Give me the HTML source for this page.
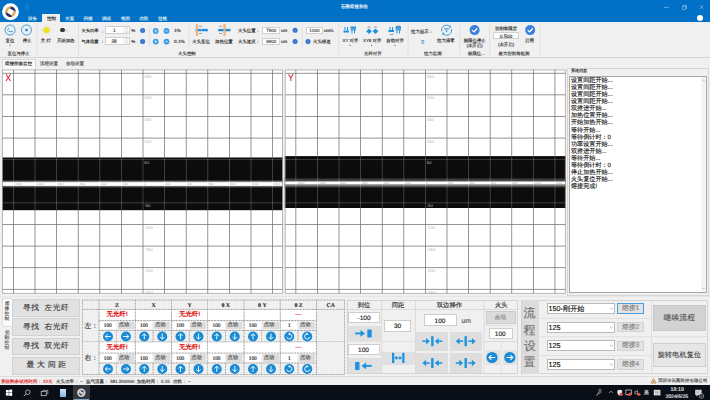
<!DOCTYPE html><html><head><meta charset="utf-8"><style>
*{box-sizing:border-box;margin:0;padding:0}
html,body{width:710px;height:400px;overflow:hidden;background:#f0f0f0;font-family:"Liberation Sans",sans-serif;color:#333;text-rendering:geometricPrecision}
.ab{position:absolute}
.t{position:absolute;white-space:nowrap;-webkit-text-stroke:0.15px currentColor}
</style></head><body>
<div class="ab" style="left:0.00px;top:0.00px;width:710.00px;height:21.50px;background:#0071c6;"></div><svg class="ab" style="left:1px;top:2px" width="19" height="20"><g transform="translate(0.000 0.250)"><circle cx="9.5" cy="9.5" r="8.4" fill="#fff"/>
<g transform="translate(9.5 9.5)">
<path d="M-1.6 -5.0 A5.2 5.2 0 0 1 5.1 1.0 Q3.6 -1.4 -0.6 -3.2 Z" fill="#2a3563"/>
<path d="M-1.6 -5.0 A5.2 5.2 0 0 1 5.1 1.0 Q3.6 -1.4 -0.6 -3.2 Z" fill="#eaa766" transform="rotate(90)"/>
<path d="M-1.6 -5.0 A5.2 5.2 0 0 1 5.1 1.0 Q3.6 -1.4 -0.6 -3.2 Z" fill="#2a3563" transform="rotate(180)"/>
<path d="M-1.6 -5.0 A5.2 5.2 0 0 1 5.1 1.0 Q3.6 -1.4 -0.6 -3.2 Z" fill="#eaa766" transform="rotate(270)"/>
</g></g></svg><div class="ab" style="left:25.30px;top:4.00px;width:4.20px;height:5.60px;background:#2f8ddf;border-radius:0.8px;opacity:0.35"></div><div class="t" style="left:340.80px;top:5.00px;font-size:4.5px;line-height:4.5px;color:#e6effa;">石墨熔接系统</div><svg class="ab" style="left:663px;top:6px" width="7" height="3"><g transform="translate(0.000 0.000)"><path d="M0.8 1.4H5.6" stroke="#b8d6f2" stroke-width="0.55"/></g></svg><svg class="ab" style="left:681px;top:4px" width="7" height="7"><g transform="translate(0.500 0.500)"><rect x="0.9" y="1.6" width="3.3" height="3.3" fill="none" stroke="#b8d6f2" stroke-width="0.5"/><path d="M1.8 1.6V0.8H5.0V4.0H4.2" fill="none" stroke="#b8d6f2" stroke-width="0.5"/></g></svg><svg class="ab" style="left:699px;top:4px" width="6" height="6"><g transform="translate(0.300 0.700)"><path d="M0.6 0.6L4.2 4.2M4.2 0.6L0.6 4.2" stroke="#c4dcf4" stroke-width="0.5"/></g></svg><div class="ab" style="left:697.00px;top:15.00px;width:6.00px;height:6.00px;background:#fff;border-radius:50%;"></div><div class="ab" style="left:41.90px;top:13.80px;width:18.50px;height:7.80px;background:#f0f0f0;"></div><div class="t" style="left:28.10px;top:16.60px;font-size:4.5px;line-height:4.5px;color:#d6e5f5;">设备</div><div class="t" style="left:46.90px;top:16.60px;font-size:4.5px;line-height:4.5px;color:#333;">控制</div><div class="t" style="left:65.30px;top:16.60px;font-size:4.5px;line-height:4.5px;color:#d6e5f5;">夹紧</div><div class="t" style="left:83.50px;top:16.60px;font-size:4.5px;line-height:4.5px;color:#d6e5f5;">扫描</div><div class="t" style="left:102.00px;top:16.60px;font-size:4.5px;line-height:4.5px;color:#d6e5f5;">调试</div><div class="t" style="left:121.00px;top:16.60px;font-size:4.5px;line-height:4.5px;color:#d6e5f5;">视图</div><div class="t" style="left:139.30px;top:16.60px;font-size:4.5px;line-height:4.5px;color:#d6e5f5;">功耗</div><div class="t" style="left:158.00px;top:16.60px;font-size:4.5px;line-height:4.5px;color:#d6e5f5;">拉锥</div><div class="ab" style="left:0.00px;top:21.50px;width:710.00px;height:36.10px;background:#f0f0f0;border-bottom:0.8px solid #d4d4d4"></div><svg class="ab" style="left:36px;top:23px" width="2" height="33"><rect x="0.600" y="0.500" width="0.700" height="32.500" fill="#dadada"/></svg><svg class="ab" style="left:78px;top:23px" width="1" height="33"><rect x="0.300" y="0.500" width="0.700" height="32.500" fill="#dadada"/></svg><svg class="ab" style="left:338px;top:23px" width="2" height="33"><rect x="0.500" y="0.500" width="0.700" height="32.500" fill="#dadada"/></svg><svg class="ab" style="left:407px;top:23px" width="2" height="33"><rect x="0.700" y="0.500" width="0.700" height="32.500" fill="#dadada"/></svg><svg class="ab" style="left:459px;top:23px" width="2" height="33"><rect x="0.600" y="0.500" width="0.700" height="32.500" fill="#dadada"/></svg><svg class="ab" style="left:489px;top:23px" width="2" height="33"><rect x="0.400" y="0.500" width="0.700" height="32.500" fill="#dadada"/></svg><svg class="ab" style="left:539px;top:23px" width="2" height="33"><rect x="0.500" y="0.500" width="0.700" height="32.500" fill="#dadada"/></svg><svg class="ab" style="left:149px;top:25px" width="2" height="22"><rect x="0.400" y="0.800" width="0.700" height="20.900" fill="#dadada"/></svg><svg class="ab" style="left:188px;top:25px" width="2" height="22"><rect x="0.600" y="0.800" width="0.700" height="20.900" fill="#dadada"/></svg><svg class="ab" style="left:301px;top:25px" width="2" height="22"><rect x="0.800" y="0.800" width="0.700" height="20.900" fill="#dadada"/></svg><div class="t" style="left:7.50px;top:51.80px;font-size:4.42px;line-height:4.42px;color:#444;">复位与停止</div><div class="t" style="left:178.10px;top:51.80px;font-size:4.42px;line-height:4.42px;color:#444;">火头控制</div><div class="t" style="left:364.00px;top:51.80px;font-size:4.42px;line-height:4.42px;color:#444;">光纤对齐</div><div class="t" style="left:424.00px;top:51.80px;font-size:4.42px;line-height:4.42px;color:#444;">拉力监测</div><div class="t" style="left:468.00px;top:51.80px;font-size:4.42px;line-height:4.42px;color:#444;">极限位...</div><div class="t" style="left:498.50px;top:51.80px;font-size:4.42px;line-height:4.42px;color:#444;">最大切割角检测</div><svg class="ab" style="left:4px;top:24px" width="13" height="13"><g transform="translate(0.000 0.000)"><circle cx="6.1" cy="6.0" r="5.0" fill="none" stroke="#c4ecff" stroke-width="1.8"/><circle cx="6.1" cy="6.0" r="5.0" fill="none" stroke="#4a8cc0" stroke-width="0.75"/><path d="M4.9 4.0Q3.4 4.6 3.9 6.4Q4.4 7.7 6.3 7.6H8.2" fill="none" stroke="#3a90d0" stroke-width="0.85"/><path d="M7.6 6.5L8.8 7.6L7.6 8.6Z" fill="#2a80c0"/></g></svg><svg class="ab" style="left:20px;top:24px" width="13" height="13"><g transform="translate(0.400 0.000)"><circle cx="6.1" cy="6.0" r="5.0" fill="none" stroke="#c4ecff" stroke-width="1.8"/><circle cx="6.1" cy="6.0" r="5.0" fill="none" stroke="#4a8cc0" stroke-width="0.75"/><rect x="4.9" y="4.8" width="2.4" height="2.4" fill="#2a88d0"/></g></svg><div class="t" style="left:5.50px;top:39.25px;font-size:4.4px;line-height:4.4px;color:#363636;">复位</div><div class="t" style="left:22.70px;top:39.25px;font-size:4.4px;line-height:4.4px;color:#363636;">停止</div><svg class="ab" style="left:9px;top:44px" width="2" height="2"><rect x="0.600" y="0.800" width="1.000" height="1.000" fill="#555"/></svg><svg class="ab" style="left:41px;top:24px" width="11" height="12"><g transform="translate(0.000 0.600)"><circle cx="5.5" cy="5.5" r="2.9" fill="#f2e21a" stroke="#d8c400" stroke-width="0.3"/><g stroke="#c9b300" stroke-width="0.45"><path d="M5.5 0.3v1.3M5.5 9.4v1.3M0.3 5.5h1.3M9.4 5.5h1.3M1.9 1.9l0.9 0.9M8.2 8.2l0.9 0.9M9.1 1.9l-0.9 0.9M1.9 9.1l0.9-0.9"/></g></g></svg><div class="t" style="left:40.85px;top:39.25px;font-size:4.4px;line-height:4.4px;color:#363636;">关 灯</div><div class="ab" style="left:60.50px;top:28.80px;width:8.50px;height:3.20px;background:#e2e2e2;border-radius:2px;"></div><div class="ab" style="left:60.40px;top:28.30px;width:4.20px;height:4.20px;background:#333;border-radius:50%;"></div><div class="t" style="left:56.90px;top:39.25px;font-size:4.4px;line-height:4.4px;color:#363636;">开始加热</div><div class="t" style="left:81.40px;top:29.00px;font-size:4.3px;line-height:4.3px;color:#363636;">火头功率</div><div class="t" style="left:81.40px;top:39.50px;font-size:4.3px;line-height:4.3px;color:#363636;">气体流量</div><div class="t" style="left:100.60px;top:29.50px;font-size:4.4px;line-height:4.4px;color:#363636;">：</div><div class="t" style="left:100.60px;top:40.00px;font-size:4.4px;line-height:4.4px;color:#363636;">：</div><div class="ab" style="left:105.20px;top:26.40px;width:24.40px;height:7.50px;background:#fff;border:0.6px solid #cfcfcf;"></div><svg class="ab" style="left:123px;top:26px" width="2" height="8"><rect x="0.600" y="0.400" width="0.600" height="7.500" fill="#d5d5d5"/></svg><div class="t" style="left:112.90px;top:30.35px;font-size:4.9px;line-height:4.9px;color:#444;">1</div><svg class="ab" style="left:123px;top:26px" width="7" height="8"><g transform="translate(0.600 0.400)"><path d="M1.9 2.4L3 1.3L4.1 2.4M1.9 5.10L3 6.20L4.1 5.10" stroke="#777" stroke-width="0.5" fill="none"/><path d="M1.6 3.75h2.8" stroke="#aaa" stroke-width="0.4"/></g></svg><div class="ab" style="left:105.20px;top:36.90px;width:24.40px;height:7.90px;background:#fff;border:0.6px solid #cfcfcf;"></div><svg class="ab" style="left:123px;top:36px" width="2" height="9"><rect x="0.600" y="0.900" width="0.600" height="7.900" fill="#d5d5d5"/></svg><div class="t" style="left:111.40px;top:41.05px;font-size:4.9px;line-height:4.9px;color:#444;">38</div><svg class="ab" style="left:123px;top:36px" width="7" height="9"><g transform="translate(0.600 0.900)"><path d="M1.9 2.4L3 1.3L4.1 2.4M1.9 5.50L3 6.60L4.1 5.50" stroke="#777" stroke-width="0.5" fill="none"/><path d="M1.6 3.95h2.8" stroke="#aaa" stroke-width="0.4"/></g></svg><div class="t" style="left:131.30px;top:29.40px;font-size:4.4px;line-height:4.4px;color:#363636;">%</div><div class="t" style="left:131.30px;top:39.90px;font-size:4.4px;line-height:4.4px;color:#363636;">%</div><svg class="ab" style="left:139px;top:27px" width="7" height="7"><g transform="translate(0.500 0.300)"><circle cx="3.1" cy="3.1" r="2.95" fill="#d6ecff"/><circle cx="3.1" cy="3.1" r="2.5" fill="#3a72c8"/><path d="M2.10 3.23L2.98 3.85L4.10 2.60" stroke="#9cc0f0" stroke-width="0.4" fill="none"/></g></svg><svg class="ab" style="left:139px;top:38px" width="7" height="7"><g transform="translate(0.500 0.300)"><circle cx="3.1" cy="3.1" r="2.95" fill="#d6ecff"/><circle cx="3.1" cy="3.1" r="2.5" fill="#3a72c8"/><path d="M2.10 3.23L2.98 3.85L4.10 2.60" stroke="#9cc0f0" stroke-width="0.4" fill="none"/></g></svg><svg class="ab" style="left:152px;top:28px" width="7" height="6"><g transform="translate(0.800 0.000)"><circle cx="2.9" cy="2.9" r="2.9" fill="#3a9de6"/><path d="M1.5 2.9h2.8M2.9 1.5v2.8" stroke="#fff" stroke-width="0.6"/></g></svg><svg class="ab" style="left:163px;top:28px" width="7" height="6"><g transform="translate(0.600 0.000)"><circle cx="2.9" cy="2.9" r="2.9" fill="#3a9de6"/><path d="M1.5 2.9h2.8" stroke="#fff" stroke-width="0.6"/></g></svg><svg class="ab" style="left:152px;top:38px" width="7" height="7"><g transform="translate(0.800 0.700)"><circle cx="2.9" cy="2.9" r="2.9" fill="#3a9de6"/><path d="M1.5 2.9h2.8M2.9 1.5v2.8" stroke="#fff" stroke-width="0.6"/></g></svg><svg class="ab" style="left:163px;top:38px" width="7" height="7"><g transform="translate(0.600 0.700)"><circle cx="2.9" cy="2.9" r="2.9" fill="#3a9de6"/><path d="M1.5 2.9h2.8" stroke="#fff" stroke-width="0.6"/></g></svg><div class="t" style="left:174.00px;top:29.40px;font-size:4.7px;line-height:4.7px;color:#363636;">1%</div><div class="t" style="left:174.00px;top:40.10px;font-size:4.7px;line-height:4.7px;color:#363636;">0.1%</div><svg class="ab" style="left:195px;top:24px" width="14" height="13"><g transform="translate(0.200 0.100)"><rect x="0" y="4.4" width="13" height="3.2" rx="1" fill="#9fdcff" opacity="0.7"/><rect x="0.5" y="5" width="5.6" height="2" fill="#1a86d8"/><rect x="6.6" y="5" width="6" height="2" fill="#1a86d8"/><rect x="0.60" y="0" width="2.4" height="11.8" fill="#f2ae72" opacity="0.92"/><path d="M3.90 2.2h3M3.90 9.3h3" stroke="#666" stroke-width="0.6"/></g></svg><svg class="ab" style="left:217px;top:24px" width="14" height="13"><g transform="translate(0.800 0.100)"><rect x="0" y="4.4" width="13" height="3.2" rx="1" fill="#9fdcff" opacity="0.7"/><rect x="0.5" y="5" width="5.6" height="2" fill="#1a86d8"/><rect x="6.6" y="5" width="6" height="2" fill="#1a86d8"/><rect x="5.50" y="0" width="2.4" height="11.8" fill="#f2ae72" opacity="0.92"/><path d="M1.20 2.2h3M1.20 9.3h3" stroke="#666" stroke-width="0.6"/></g></svg><div class="t" style="left:192.30px;top:39.50px;font-size:4.42px;line-height:4.42px;color:#363636;">火头复位</div><div class="t" style="left:215.10px;top:39.50px;font-size:4.42px;line-height:4.42px;color:#363636;">加热位置</div><div class="t" style="left:238.00px;top:29.40px;font-size:4.42px;line-height:4.42px;color:#363636;">火头位置：</div><div class="t" style="left:238.00px;top:39.90px;font-size:4.42px;line-height:4.42px;color:#363636;">火头速度：</div><div class="ab" style="left:262.00px;top:27.00px;width:18.40px;height:6.90px;background:#fff;border:0.6px solid #d0d0d0;"></div><div class="t" style="left:266.20px;top:28.95px;font-size:4.6px;line-height:4.6px;color:#555;">7900</div><div class="ab" style="left:262.00px;top:37.60px;width:18.40px;height:7.00px;background:#fff;border:0.6px solid #d0d0d0;"></div><div class="t" style="left:266.20px;top:39.60px;font-size:4.6px;line-height:4.6px;color:#555;">8900</div><div class="t" style="left:281.00px;top:29.40px;font-size:4.4px;line-height:4.4px;color:#363636;">um</div><div class="t" style="left:281.00px;top:39.90px;font-size:4.4px;line-height:4.4px;color:#363636;">um</div><svg class="ab" style="left:292px;top:27px" width="7" height="7"><g transform="translate(0.000 0.200)"><circle cx="3.1" cy="3.1" r="2.95" fill="#d6ecff"/><circle cx="3.1" cy="3.1" r="2.5" fill="#3a72c8"/><path d="M2.10 3.23L2.98 3.85L4.10 2.60" stroke="#9cc0f0" stroke-width="0.4" fill="none"/></g></svg><svg class="ab" style="left:292px;top:38px" width="7" height="7"><g transform="translate(0.000 0.400)"><circle cx="3.1" cy="3.1" r="2.95" fill="#d6ecff"/><circle cx="3.1" cy="3.1" r="2.5" fill="#3a72c8"/><path d="M2.10 3.23L2.98 3.85L4.10 2.60" stroke="#9cc0f0" stroke-width="0.4" fill="none"/></g></svg><div class="ab" style="left:305.50px;top:27.00px;width:17.70px;height:6.70px;background:#fff;border:0.6px solid #d0d0d0;"></div><div class="t" style="left:309.35px;top:28.85px;font-size:4.6px;line-height:4.6px;color:#555;">1000</div><div class="t" style="left:324.00px;top:29.40px;font-size:4.4px;line-height:4.4px;color:#363636;">um/s</div><svg class="ab" style="left:304px;top:38px" width="8" height="7"><g transform="translate(0.900 0.400)"><circle cx="3.1" cy="3.1" r="2.95" fill="#d6ecff"/><circle cx="3.1" cy="3.1" r="2.5" fill="#3a72c8"/><path d="M2.10 3.23L2.98 3.85L4.10 2.60" stroke="#9cc0f0" stroke-width="0.4" fill="none"/></g></svg><div class="t" style="left:313.00px;top:39.90px;font-size:4.42px;line-height:4.42px;color:#363636;">火头移速</div><svg class="ab" style="left:343px;top:26px" width="14" height="8"><g transform="translate(0.500 0.000)"><g fill="#1c8fe0"><rect x="0" y="4.5" width="5.5" height="2"/><rect x="1" y="1" width="1" height="3"/><rect x="3.5" y="1" width="1" height="3"/><rect x="7" y="0.5" width="5.5" height="2.2"/><rect x="7" y="3.2" width="5.5" height="1.2"/><rect x="8" y="4.4" width="1" height="3"/><rect x="10.5" y="4.4" width="1" height="3"/></g></g></svg><svg class="ab" style="left:366px;top:26px" width="13" height="9"><g transform="translate(0.000 0.000)"><g fill="#1c8fe0"><path d="M3 2.5L5.8 5.3L3 8.1L0.2 5.3Z"/><path d="M9.5 2.5L12.3 5.3L9.5 8.1L6.7 5.3Z"/></g><path d="M1.5 1.5Q3 0 4.5 1.5M8 1.5Q9.5 0 11 1.5" stroke="#333" stroke-width="0.5" fill="none"/></g></svg><svg class="ab" style="left:388px;top:25px" width="14" height="11"><g transform="translate(0.500 0.500)"><g fill="#1c8fe0"><rect x="0" y="4.5" width="5.5" height="2"/><rect x="1" y="1.5" width="1" height="3"/><rect x="3.5" y="1.5" width="1" height="3"/><rect x="7" y="1" width="5.5" height="2.2"/><rect x="7" y="3.7" width="5.5" height="1.2"/><rect x="8" y="4.9" width="1" height="3"/><rect x="10.5" y="4.9" width="1" height="3"/></g><path d="M1 8.5Q3 9.8 5 8.5M8 0.8Q10 -0.4 12 1" stroke="#333" stroke-width="0.5" fill="none"/></g></svg><div class="t" style="left:342.50px;top:39.00px;font-size:4.4px;line-height:4.4px;color:#363636;">XY 对齐</div><div class="t" style="left:363.00px;top:39.00px;font-size:4.4px;line-height:4.4px;color:#363636;">XYθ 对齐</div><div class="t" style="left:386.30px;top:39.00px;font-size:4.42px;line-height:4.42px;color:#363636;">自动对齐</div><svg class="ab" style="left:349px;top:44px" width="2" height="2"><rect x="0.500" y="0.900" width="1.000" height="1.000" fill="#555"/></svg><svg class="ab" style="left:371px;top:44px" width="1" height="2"><rect x="0.000" y="0.900" width="1.000" height="1.000" fill="#555"/></svg><svg class="ab" style="left:394px;top:44px" width="2" height="2"><rect x="0.500" y="0.900" width="1.000" height="1.000" fill="#555"/></svg><div class="t" style="left:411.00px;top:29.50px;font-size:4.42px;line-height:4.42px;color:#363636;">拉力显示：</div><div class="t" style="left:421.00px;top:40.60px;font-size:5.6px;line-height:5.6px;color:#3a8ee0;">0</div><svg class="ab" style="left:440px;top:24px" width="13" height="13"><g transform="translate(0.600 0.200)"><g transform="translate(6 6)"><path d="M-4.9 1.2A5 5 0 0 1 3.2 -3.9" stroke="#3aa0e0" stroke-width="1" fill="none"/><path d="M4.9 -1.2A5 5 0 0 1 -3.2 3.9" stroke="#3aa0e0" stroke-width="1" fill="none"/><path d="M3.9 -5.2L4.6 -2.6L2 -2.4Z" fill="#3aa0e0"/><path d="M-3.9 5.2L-4.6 2.6L-2 2.4Z" fill="#3aa0e0"/><path d="M-2.6 -1.6H2.6M-1.9 -0.3H1.9" stroke="#4a90c8" stroke-width="0.75"/><path d="M-1.3 0.6H1.3L0 2.4Z" fill="#3aa0e0"/></g></g></svg><div class="t" style="left:437.00px;top:39.20px;font-size:4.42px;line-height:4.42px;color:#363636;">拉力清零</div><svg class="ab" style="left:469px;top:25px" width="11" height="11"><g transform="translate(0.600 0.100)"><circle cx="5.0" cy="5.0" r="5.0" fill="#3d7fdc"/><path d="M2.50 5.00L4.40 6.80L7.50 3.40" stroke="#fff" stroke-width="1.30" fill="none"/></g></svg><div class="t" style="left:463.70px;top:39.10px;font-size:4.42px;line-height:4.42px;color:#363636;">极限位停止</div><div class="t" style="left:466.50px;top:44.30px;font-size:4.42px;line-height:4.42px;color:#363636;">(未开启)</div><div class="t" style="left:495.00px;top:26.50px;font-size:4.42px;line-height:4.42px;color:#363636;">切割角限定</div><div class="ab" style="left:493.30px;top:32.40px;width:25.90px;height:7.00px;background:#fff;border:0.6px solid #d0d0d0;"></div><div class="t" style="left:499.75px;top:34.90px;font-size:5.0px;line-height:5.0px;color:#333;">0.500</div><div class="t" style="left:498.00px;top:43.10px;font-size:4.42px;line-height:4.42px;color:#363636;">(未开启)</div><svg class="ab" style="left:525px;top:25px" width="11" height="11"><g transform="translate(0.200 0.100)"><circle cx="5.0" cy="5.0" r="5.0" fill="#3d7fdc"/><path d="M2.50 5.00L4.40 6.80L7.50 3.40" stroke="#fff" stroke-width="1.30" fill="none"/></g></svg><div class="t" style="left:525.00px;top:39.10px;font-size:4.42px;line-height:4.42px;color:#363636;">启用</div><div class="ab" style="left:1.90px;top:59.40px;width:34.20px;height:10.60px;background:#fafafa;border:0.6px solid #d8d8d8;border-bottom:none"></div><div class="t" style="left:5.10px;top:62.20px;font-size:4.5px;line-height:4.5px;color:#333;">熔接图像监控</div><div class="t" style="left:40.00px;top:62.20px;font-size:4.5px;line-height:4.5px;color:#555;">流程设置</div><div class="t" style="left:66.00px;top:62.20px;font-size:4.5px;line-height:4.5px;color:#555;">自动设置</div><svg class="ab" style="left:2px;top:69px" width="281" height="225"><g transform="translate(0.300 0.6)"><rect x="0" y="0" width="280.4" height="224.00000000000003" fill="#fff"/><rect x="10.724999999999977" y="0" width="0.75" height="224.00000000000003" fill="#727272"/><rect x="32.325" y="0" width="0.75" height="224.00000000000003" fill="#727272"/><rect x="53.925" y="0" width="0.75" height="224.00000000000003" fill="#727272"/><rect x="75.52499999999999" y="0" width="0.75" height="224.00000000000003" fill="#727272"/><rect x="97.125" y="0" width="0.75" height="224.00000000000003" fill="#727272"/><rect x="118.72500000000001" y="0" width="0.75" height="224.00000000000003" fill="#727272"/><rect x="140.325" y="0" width="0.75" height="224.00000000000003" fill="#727272"/><rect x="161.92499999999998" y="0" width="0.75" height="224.00000000000003" fill="#727272"/><rect x="183.52499999999998" y="0" width="0.75" height="224.00000000000003" fill="#727272"/><rect x="205.125" y="0" width="0.75" height="224.00000000000003" fill="#727272"/><rect x="226.725" y="0" width="0.75" height="224.00000000000003" fill="#727272"/><rect x="248.325" y="0" width="0.75" height="224.00000000000003" fill="#727272"/><rect x="269.925" y="0" width="0.75" height="224.00000000000003" fill="#727272"/><rect x="0" y="3.2750000000000057" width="280.4" height="0.75" fill="#727272"/><rect x="0" y="24.88000000000001" width="280.4" height="0.75" fill="#727272"/><rect x="0" y="46.485000000000014" width="280.4" height="0.75" fill="#727272"/><rect x="0" y="68.09" width="280.4" height="0.75" fill="#727272"/><rect x="0" y="89.69500000000002" width="280.4" height="0.75" fill="#727272"/><rect x="0" y="111.30000000000001" width="280.4" height="0.75" fill="#727272"/><rect x="0" y="132.905" width="280.4" height="0.75" fill="#727272"/><rect x="0" y="154.51000000000002" width="280.4" height="0.75" fill="#727272"/><rect x="0" y="176.115" width="280.4" height="0.75" fill="#727272"/><rect x="0" y="197.72" width="280.4" height="0.75" fill="#727272"/><rect x="0" y="219.32500000000002" width="280.4" height="0.75" fill="#727272"/><rect x="0" y="87.9" width="280.4" height="52.69999999999999" fill="#0c0c0c"/><defs><linearGradient id="wlX" x1="0" y1="0" x2="0" y2="1"><stop offset="0" stop-color="#0c0c0c"/><stop offset="0.2" stop-color="#444"/><stop offset="0.34" stop-color="#f4f4f4"/><stop offset="0.4" stop-color="#fff"/><stop offset="0.6" stop-color="#fff"/><stop offset="0.66" stop-color="#f4f4f4"/><stop offset="0.8" stop-color="#444"/><stop offset="1" stop-color="#0c0c0c"/></linearGradient></defs><rect x="0" y="109.9" width="280.4" height="9" fill="url(#wlX)"/><rect x="10.699999999999976" y="87.9" width="0.8" height="52.69999999999999" fill="#fff" opacity="0.26"/><rect x="32.300000000000004" y="87.9" width="0.8" height="52.69999999999999" fill="#fff" opacity="0.26"/><rect x="53.9" y="87.9" width="0.8" height="52.69999999999999" fill="#fff" opacity="0.26"/><rect x="75.49999999999999" y="87.9" width="0.8" height="52.69999999999999" fill="#fff" opacity="0.26"/><rect x="97.1" y="87.9" width="0.8" height="52.69999999999999" fill="#fff" opacity="0.26"/><rect x="118.7" y="87.9" width="0.8" height="52.69999999999999" fill="#fff" opacity="0.26"/><rect x="140.29999999999998" y="87.9" width="0.8" height="52.69999999999999" fill="#fff" opacity="0.26"/><rect x="161.89999999999998" y="87.9" width="0.8" height="52.69999999999999" fill="#fff" opacity="0.26"/><rect x="183.49999999999997" y="87.9" width="0.8" height="52.69999999999999" fill="#fff" opacity="0.26"/><rect x="205.1" y="87.9" width="0.8" height="52.69999999999999" fill="#fff" opacity="0.26"/><rect x="226.7" y="87.9" width="0.8" height="52.69999999999999" fill="#fff" opacity="0.26"/><rect x="248.29999999999998" y="87.9" width="0.8" height="52.69999999999999" fill="#fff" opacity="0.26"/><rect x="269.90000000000003" y="87.9" width="0.8" height="52.69999999999999" fill="#fff" opacity="0.26"/><rect x="0" y="89.67000000000002" width="280.4" height="0.8" fill="#fff" opacity="0.26"/><rect x="0" y="111.275" width="280.4" height="0.8" fill="#fff" opacity="0.26"/><rect x="0" y="132.88" width="280.4" height="0.8" fill="#fff" opacity="0.26"/><text x="142.0" y="8.150000000000006" font-size="4.3" fill="#b4b4b4" font-family="Liberation Sans">250</text><text x="142.0" y="29.75500000000001" font-size="4.3" fill="#b4b4b4" font-family="Liberation Sans">200</text><text x="142.0" y="51.360000000000014" font-size="4.3" fill="#b4b4b4" font-family="Liberation Sans">150</text><text x="142.0" y="72.965" font-size="4.3" fill="#b4b4b4" font-family="Liberation Sans">100</text><text x="142.0" y="94.57000000000002" font-size="4.3" fill="#b4b4b4" font-family="Liberation Sans">50</text><text x="142.0" y="137.78" font-size="4.3" fill="#b4b4b4" font-family="Liberation Sans">-50</text><text x="142.0" y="159.38500000000002" font-size="4.3" fill="#b4b4b4" font-family="Liberation Sans">-100</text><text x="142.0" y="180.99" font-size="4.3" fill="#b4b4b4" font-family="Liberation Sans">-150</text><text x="142.0" y="202.595" font-size="4.3" fill="#b4b4b4" font-family="Liberation Sans">-200</text><text x="142.0" y="224.20000000000002" font-size="4.3" fill="#b4b4b4" font-family="Liberation Sans">-250</text><text x="11.899999999999977" y="115.60000000000001" font-size="3" fill="#aaa" font-family="Liberation Sans">-1200</text><text x="33.5" y="115.60000000000001" font-size="3" fill="#aaa" font-family="Liberation Sans">-1000</text><text x="55.099999999999994" y="115.60000000000001" font-size="3" fill="#aaa" font-family="Liberation Sans">-800</text><text x="76.69999999999999" y="115.60000000000001" font-size="3" fill="#aaa" font-family="Liberation Sans">-600</text><text x="98.3" y="115.60000000000001" font-size="3" fill="#aaa" font-family="Liberation Sans">-400</text><text x="119.9" y="115.60000000000001" font-size="3" fill="#aaa" font-family="Liberation Sans">-200</text><text x="141.5" y="115.60000000000001" font-size="3" fill="#aaa" font-family="Liberation Sans">0</text><text x="163.1" y="115.60000000000001" font-size="3" fill="#aaa" font-family="Liberation Sans">200</text><text x="184.7" y="115.60000000000001" font-size="3" fill="#aaa" font-family="Liberation Sans">400</text><text x="206.3" y="115.60000000000001" font-size="3" fill="#aaa" font-family="Liberation Sans">600</text><text x="227.9" y="115.60000000000001" font-size="3" fill="#aaa" font-family="Liberation Sans">800</text><text x="249.5" y="115.60000000000001" font-size="3" fill="#aaa" font-family="Liberation Sans">1000</text><text x="271.1" y="115.60000000000001" font-size="3" fill="#aaa" font-family="Liberation Sans">1200</text><rect x="0.35" y="0.35" width="279.7" height="223.30000000000004" fill="none" stroke="#9a9a9a" stroke-width="0.7"/><path d="M3.70 4.60L8.30 11.40M8.30 4.60L3.70 11.40" stroke="#d8303c" stroke-width="1.05" fill="none"/></g></svg><svg class="ab" style="left:284px;top:69px" width="282" height="225"><g transform="translate(0.800 0.6)"><rect x="0" y="0" width="280.8" height="224.00000000000003" fill="#fff"/><rect x="10.685000000000002" y="0" width="0.75" height="224.00000000000003" fill="#727272"/><rect x="32.27499999999998" y="0" width="0.75" height="224.00000000000003" fill="#727272"/><rect x="53.86499999999995" y="0" width="0.75" height="224.00000000000003" fill="#727272"/><rect x="75.45499999999998" y="0" width="0.75" height="224.00000000000003" fill="#727272"/><rect x="97.04499999999996" y="0" width="0.75" height="224.00000000000003" fill="#727272"/><rect x="118.63499999999999" y="0" width="0.75" height="224.00000000000003" fill="#727272"/><rect x="140.22499999999997" y="0" width="0.75" height="224.00000000000003" fill="#727272"/><rect x="161.81499999999994" y="0" width="0.75" height="224.00000000000003" fill="#727272"/><rect x="183.40499999999997" y="0" width="0.75" height="224.00000000000003" fill="#727272"/><rect x="204.99499999999995" y="0" width="0.75" height="224.00000000000003" fill="#727272"/><rect x="226.58499999999998" y="0" width="0.75" height="224.00000000000003" fill="#727272"/><rect x="248.175" y="0" width="0.75" height="224.00000000000003" fill="#727272"/><rect x="269.76499999999993" y="0" width="0.75" height="224.00000000000003" fill="#727272"/><rect x="0" y="3.2750000000000057" width="280.8" height="0.75" fill="#727272"/><rect x="0" y="24.88000000000001" width="280.8" height="0.75" fill="#727272"/><rect x="0" y="46.485000000000014" width="280.8" height="0.75" fill="#727272"/><rect x="0" y="68.09" width="280.8" height="0.75" fill="#727272"/><rect x="0" y="89.69500000000002" width="280.8" height="0.75" fill="#727272"/><rect x="0" y="111.30000000000001" width="280.8" height="0.75" fill="#727272"/><rect x="0" y="132.905" width="280.8" height="0.75" fill="#727272"/><rect x="0" y="154.51000000000002" width="280.8" height="0.75" fill="#727272"/><rect x="0" y="176.115" width="280.8" height="0.75" fill="#727272"/><rect x="0" y="197.72" width="280.8" height="0.75" fill="#727272"/><rect x="0" y="219.32500000000002" width="280.8" height="0.75" fill="#727272"/><rect x="0" y="86.5" width="280.8" height="51.900000000000006" fill="#0c0c0c"/><defs><linearGradient id="wlY" x1="0" y1="0" x2="0" y2="1"><stop offset="0" stop-color="#0c0c0c"/><stop offset="0.14" stop-color="#303030"/><stop offset="0.24" stop-color="#4a4a4a"/><stop offset="0.33" stop-color="#3a3a3a"/><stop offset="0.42" stop-color="#eee"/><stop offset="0.47" stop-color="#fff"/><stop offset="0.6" stop-color="#fff"/><stop offset="0.67" stop-color="#a0a0a0"/><stop offset="0.8" stop-color="#6a6a6a"/><stop offset="1" stop-color="#0c0c0c"/></linearGradient></defs><rect x="0" y="107.89999999999999" width="280.8" height="10.5" fill="url(#wlY)"/><rect x="10.660000000000002" y="86.5" width="0.8" height="51.900000000000006" fill="#fff" opacity="0.26"/><rect x="32.24999999999998" y="86.5" width="0.8" height="51.900000000000006" fill="#fff" opacity="0.26"/><rect x="53.839999999999954" y="86.5" width="0.8" height="51.900000000000006" fill="#fff" opacity="0.26"/><rect x="75.42999999999998" y="86.5" width="0.8" height="51.900000000000006" fill="#fff" opacity="0.26"/><rect x="97.01999999999995" y="86.5" width="0.8" height="51.900000000000006" fill="#fff" opacity="0.26"/><rect x="118.60999999999999" y="86.5" width="0.8" height="51.900000000000006" fill="#fff" opacity="0.26"/><rect x="140.19999999999996" y="86.5" width="0.8" height="51.900000000000006" fill="#fff" opacity="0.26"/><rect x="161.78999999999994" y="86.5" width="0.8" height="51.900000000000006" fill="#fff" opacity="0.26"/><rect x="183.37999999999997" y="86.5" width="0.8" height="51.900000000000006" fill="#fff" opacity="0.26"/><rect x="204.96999999999994" y="86.5" width="0.8" height="51.900000000000006" fill="#fff" opacity="0.26"/><rect x="226.55999999999997" y="86.5" width="0.8" height="51.900000000000006" fill="#fff" opacity="0.26"/><rect x="248.15" y="86.5" width="0.8" height="51.900000000000006" fill="#fff" opacity="0.26"/><rect x="269.73999999999995" y="86.5" width="0.8" height="51.900000000000006" fill="#fff" opacity="0.26"/><rect x="0" y="89.67000000000002" width="280.8" height="0.8" fill="#fff" opacity="0.26"/><rect x="0" y="111.275" width="280.8" height="0.8" fill="#fff" opacity="0.26"/><rect x="0" y="132.88" width="280.8" height="0.8" fill="#fff" opacity="0.26"/><text x="141.89999999999998" y="8.150000000000006" font-size="4.3" fill="#b4b4b4" font-family="Liberation Sans">250</text><text x="141.89999999999998" y="29.75500000000001" font-size="4.3" fill="#b4b4b4" font-family="Liberation Sans">200</text><text x="141.89999999999998" y="51.360000000000014" font-size="4.3" fill="#b4b4b4" font-family="Liberation Sans">150</text><text x="141.89999999999998" y="72.965" font-size="4.3" fill="#b4b4b4" font-family="Liberation Sans">100</text><text x="141.89999999999998" y="94.57000000000002" font-size="4.3" fill="#b4b4b4" font-family="Liberation Sans">50</text><text x="141.89999999999998" y="137.78" font-size="4.3" fill="#b4b4b4" font-family="Liberation Sans">-50</text><text x="141.89999999999998" y="159.38500000000002" font-size="4.3" fill="#b4b4b4" font-family="Liberation Sans">-100</text><text x="141.89999999999998" y="180.99" font-size="4.3" fill="#b4b4b4" font-family="Liberation Sans">-150</text><text x="141.89999999999998" y="202.595" font-size="4.3" fill="#b4b4b4" font-family="Liberation Sans">-200</text><text x="141.89999999999998" y="224.20000000000002" font-size="4.3" fill="#b4b4b4" font-family="Liberation Sans">-250</text><text x="11.860000000000003" y="114.3" font-size="3" fill="#aaa" font-family="Liberation Sans">-1200</text><text x="33.449999999999974" y="114.3" font-size="3" fill="#aaa" font-family="Liberation Sans">-1000</text><text x="55.03999999999995" y="114.3" font-size="3" fill="#aaa" font-family="Liberation Sans">-800</text><text x="76.62999999999998" y="114.3" font-size="3" fill="#aaa" font-family="Liberation Sans">-600</text><text x="98.21999999999996" y="114.3" font-size="3" fill="#aaa" font-family="Liberation Sans">-400</text><text x="119.80999999999999" y="114.3" font-size="3" fill="#aaa" font-family="Liberation Sans">-200</text><text x="141.39999999999998" y="114.3" font-size="3" fill="#aaa" font-family="Liberation Sans">0</text><text x="162.98999999999995" y="114.3" font-size="3" fill="#aaa" font-family="Liberation Sans">200</text><text x="184.57999999999998" y="114.3" font-size="3" fill="#aaa" font-family="Liberation Sans">400</text><text x="206.16999999999996" y="114.3" font-size="3" fill="#aaa" font-family="Liberation Sans">600</text><text x="227.76" y="114.3" font-size="3" fill="#aaa" font-family="Liberation Sans">800</text><text x="249.35000000000002" y="114.3" font-size="3" fill="#aaa" font-family="Liberation Sans">1000</text><text x="270.93999999999994" y="114.3" font-size="3" fill="#aaa" font-family="Liberation Sans">1200</text><rect x="0.35" y="0.35" width="280.1" height="223.30000000000004" fill="none" stroke="#9a9a9a" stroke-width="0.7"/><path d="M3.70 4.60L6.00 8.10L8.30 4.60M6.00 8.10V11.50" stroke="#d8303c" stroke-width="1.05" fill="none"/></g></svg><div class="ab" style="left:567.00px;top:68.10px;width:141.60px;height:227.50px;background:#f0f0f0;border:0.7px solid #d6d6d6;"></div><div class="t" style="left:571.00px;top:69.30px;font-size:4.0px;line-height:4.0px;color:#333;">系统消息</div><div class="ab" style="left:568.80px;top:76.30px;width:137.80px;height:216.50px;background:#fff;border:0.7px solid #a8a8a8;"></div><div class="ab" style="left:700.60px;top:77.00px;width:5.40px;height:215.10px;background:#f4f4f4;"></div><svg class="ab" style="left:701px;top:78px" width="5" height="214"><g transform="translate(0.000 0.000)"><path d="M1.3 3.2L2.5 2L3.7 3.2M1.3 209.8L2.5 211L3.7 209.8" stroke="#888" stroke-width="0.5" fill="none"/></g></svg><div class="t" style="left:571.00px;top:78.10px;font-size:6.1px;line-height:6.1px;color:#222;">设置间距开始...</div><div class="t" style="left:571.00px;top:85.16px;font-size:6.1px;line-height:6.1px;color:#222;">设置间距开始...</div><div class="t" style="left:571.00px;top:92.21px;font-size:6.1px;line-height:6.1px;color:#222;">设置间距开始...</div><div class="t" style="left:571.00px;top:99.27px;font-size:6.1px;line-height:6.1px;color:#222;">设置间距开始...</div><div class="t" style="left:571.00px;top:106.33px;font-size:6.1px;line-height:6.1px;color:#222;">双推进开始...</div><div class="t" style="left:571.00px;top:113.38px;font-size:6.1px;line-height:6.1px;color:#222;">加热位置开始...</div><div class="t" style="left:571.00px;top:120.44px;font-size:6.1px;line-height:6.1px;color:#222;">开始加热开始...</div><div class="t" style="left:571.00px;top:127.50px;font-size:6.1px;line-height:6.1px;color:#222;">等待开始...</div><div class="t" style="left:571.00px;top:134.56px;font-size:6.1px;line-height:6.1px;color:#222;">等待倒计时：0</div><div class="t" style="left:571.00px;top:141.61px;font-size:6.1px;line-height:6.1px;color:#222;">功率设置开始...</div><div class="t" style="left:571.00px;top:148.67px;font-size:6.1px;line-height:6.1px;color:#222;">双推进开始...</div><div class="t" style="left:571.00px;top:155.73px;font-size:6.1px;line-height:6.1px;color:#222;">等待开始...</div><div class="t" style="left:571.00px;top:162.78px;font-size:6.1px;line-height:6.1px;color:#222;">等待倒计时：0</div><div class="t" style="left:571.00px;top:169.84px;font-size:6.1px;line-height:6.1px;color:#222;">停止加热开始...</div><div class="t" style="left:571.00px;top:176.90px;font-size:6.1px;line-height:6.1px;color:#222;">火头复位开始...</div><div class="t" style="left:571.00px;top:183.95px;font-size:6.1px;line-height:6.1px;color:#222;">熔接完成!</div><svg class="ab" style="left:0px;top:296px" width="710" height="1"><rect x="0.000" y="0.100" width="710.000" height="0.800" fill="#e4e4e4"/></svg><div class="ab" style="left:1.80px;top:298.40px;width:10.40px;height:29.00px;background:#fbfbfb;border:0.6px solid #dedede;border-right:none"></div><div class="t" style="left:5.00px;top:301.50px;font-size:4.6px;line-height:4.6px;color:#555;">熔</div><div class="t" style="left:4.50px;top:306.60px;font-size:4.6px;line-height:4.6px;color:#555;">接</div><div class="t" style="left:4.50px;top:311.70px;font-size:4.6px;line-height:4.6px;color:#555;">控</div><div class="t" style="left:4.50px;top:316.80px;font-size:4.6px;line-height:4.6px;color:#555;">制</div><div class="t" style="left:5.00px;top:331.00px;font-size:4.6px;line-height:4.6px;color:#666;">切</div><div class="t" style="left:4.50px;top:336.10px;font-size:4.6px;line-height:4.6px;color:#666;">割</div><div class="t" style="left:4.50px;top:341.20px;font-size:4.6px;line-height:4.6px;color:#666;">控</div><div class="t" style="left:4.50px;top:346.30px;font-size:4.6px;line-height:4.6px;color:#666;">制</div><div class="ab" style="left:12.00px;top:299.30px;width:68.40px;height:17.30px;background:#e1e1e1;border:0.7px solid #d2d2d2;"></div><div class="t" style="left:23.00px;top:303.55px;font-size:7.7px;line-height:7.7px;color:#3a3a3a;font-family:'Liberation Serif',serif;letter-spacing:0.5px;">寻找</div><div class="t" style="left:44.50px;top:303.55px;font-size:7.7px;line-height:7.7px;color:#3a3a3a;font-family:'Liberation Serif',serif;letter-spacing:0.5px;">左光纤</div><div class="ab" style="left:12.00px;top:318.10px;width:68.40px;height:18.00px;background:#e1e1e1;border:0.7px solid #d2d2d2;"></div><div class="t" style="left:23.00px;top:322.70px;font-size:7.7px;line-height:7.7px;color:#3a3a3a;font-family:'Liberation Serif',serif;letter-spacing:0.5px;">寻找</div><div class="t" style="left:44.50px;top:322.70px;font-size:7.7px;line-height:7.7px;color:#3a3a3a;font-family:'Liberation Serif',serif;letter-spacing:0.5px;">右光纤</div><div class="ab" style="left:12.00px;top:338.00px;width:68.40px;height:17.20px;background:#e1e1e1;border:0.7px solid #d2d2d2;"></div><div class="t" style="left:23.00px;top:342.20px;font-size:7.7px;line-height:7.7px;color:#3a3a3a;font-family:'Liberation Serif',serif;letter-spacing:0.5px;">寻找</div><div class="t" style="left:44.50px;top:342.20px;font-size:7.7px;line-height:7.7px;color:#3a3a3a;font-family:'Liberation Serif',serif;letter-spacing:0.5px;">双光纤</div><div class="ab" style="left:12.00px;top:357.00px;width:68.40px;height:17.50px;background:#e1e1e1;border:0.7px solid #d2d2d2;"></div><div class="t" style="left:26.60px;top:361.35px;font-size:7.7px;line-height:7.7px;color:#3a3a3a;font-family:'Liberation Serif',serif;">最</div><div class="t" style="left:37.00px;top:361.35px;font-size:7.7px;line-height:7.7px;color:#3a3a3a;font-family:'Liberation Serif',serif;">大</div><div class="t" style="left:47.90px;top:361.35px;font-size:7.7px;line-height:7.7px;color:#3a3a3a;font-family:'Liberation Serif',serif;">间</div><div class="t" style="left:58.30px;top:361.35px;font-size:7.7px;line-height:7.7px;color:#3a3a3a;font-family:'Liberation Serif',serif;">距</div><div class="t" style="left:115.12px;top:304.10px;font-size:5.8px;line-height:5.8px;color:#333;font-family:'Liberation Serif',serif;font-weight:bold;">Z</div><div class="ab" style="left:99.50px;top:310.00px;width:35.25px;height:10.40px;background:#fff;"></div><div class="t" style="left:106.62px;top:312.00px;font-size:6.4px;line-height:6.4px;color:#e01818;font-family:'Liberation Serif',serif;-webkit-text-stroke:0.3px #e01818">无光纤!</div><svg class="ab" style="left:99px;top:319px" width="37" height="2"><line x1="0.000" y1="1.500" x2="36.250" y2="1.500" stroke="#6e6e6e" stroke-width="0.75" stroke-dasharray="0.75 0.75"/></svg><div class="ab" style="left:100.00px;top:321.50px;width:16.00px;height:7.50px;background:#fff;"></div><div class="t" style="left:103.70px;top:324.00px;font-size:5.4px;line-height:5.4px;color:#222;font-family:'Liberation Serif',serif;">100</div><div class="ab" style="left:117.50px;top:321.50px;width:16.00px;height:7.50px;background:#dcdcdc;"></div><div class="t" style="left:118.70px;top:323.10px;font-size:5.3px;line-height:5.3px;color:#555;">点动</div><svg class="ab" style="left:99px;top:329px" width="37" height="2"><line x1="0.000" y1="1.500" x2="36.250" y2="1.500" stroke="#6e6e6e" stroke-width="0.75" stroke-dasharray="0.75 0.75"/></svg><svg class="ab" style="left:115px;top:330px" width="2" height="12"><line x1="1.800" y1="0.500" x2="1.800" y2="11.900" stroke="#6e6e6e" stroke-width="0.75" stroke-dasharray="0.75 0.75"/></svg><svg class="ab" style="left:103px;top:331px" width="10" height="11"><g transform="translate(0.000 0.500) scale(1.00000 1.00000) translate(5.0 5.0)"><circle r="5" fill="#1a8ad4"/><path d="M2.9 0H-2.7M-0.5 -2.2L-2.7 0L-0.5 2.2" stroke="#fff" stroke-width="0.9" fill="none" stroke-linecap="butt" stroke-linejoin="miter"/></g></svg><svg class="ab" style="left:121px;top:331px" width="10" height="11"><g transform="translate(0.000 0.500) scale(1.00000 1.00000) translate(5.0 5.0)"><circle r="5" fill="#1a8ad4"/><path d="M-2.9 0H2.7M0.5 -2.2L2.7 0L0.5 2.2" stroke="#fff" stroke-width="0.9" fill="none" stroke-linecap="butt" stroke-linejoin="miter"/></g></svg><div class="ab" style="left:99.50px;top:342.50px;width:35.25px;height:10.40px;background:#fff;"></div><div class="t" style="left:106.62px;top:344.50px;font-size:6.4px;line-height:6.4px;color:#e01818;font-family:'Liberation Serif',serif;-webkit-text-stroke:0.3px #e01818">无光纤!</div><svg class="ab" style="left:99px;top:352px" width="37" height="2"><line x1="0.000" y1="1.000" x2="36.250" y2="1.000" stroke="#6e6e6e" stroke-width="0.75" stroke-dasharray="0.75 0.75"/></svg><div class="ab" style="left:100.00px;top:354.00px;width:16.00px;height:7.50px;background:#fff;"></div><div class="t" style="left:103.70px;top:356.50px;font-size:5.4px;line-height:5.4px;color:#222;font-family:'Liberation Serif',serif;">100</div><div class="ab" style="left:117.50px;top:354.00px;width:16.00px;height:7.50px;background:#dcdcdc;"></div><div class="t" style="left:118.70px;top:355.60px;font-size:5.3px;line-height:5.3px;color:#555;">点动</div><svg class="ab" style="left:99px;top:362px" width="37" height="2"><line x1="0.000" y1="1.000" x2="36.250" y2="1.000" stroke="#6e6e6e" stroke-width="0.75" stroke-dasharray="0.75 0.75"/></svg><svg class="ab" style="left:115px;top:363px" width="2" height="12"><line x1="1.800" y1="0.000" x2="1.800" y2="11.400" stroke="#6e6e6e" stroke-width="0.75" stroke-dasharray="0.75 0.75"/></svg><svg class="ab" style="left:103px;top:364px" width="10" height="10"><g transform="translate(0.000 0.000) scale(1.00000 1.00000) translate(5.0 5.0)"><circle r="5" fill="#1a8ad4"/><path d="M2.9 0H-2.7M-0.5 -2.2L-2.7 0L-0.5 2.2" stroke="#fff" stroke-width="0.9" fill="none" stroke-linecap="butt" stroke-linejoin="miter"/></g></svg><svg class="ab" style="left:121px;top:364px" width="10" height="10"><g transform="translate(0.000 0.000) scale(1.00000 1.00000) translate(5.0 5.0)"><circle r="5" fill="#1a8ad4"/><path d="M-2.9 0H2.7M0.5 -2.2L2.7 0L0.5 2.2" stroke="#fff" stroke-width="0.9" fill="none" stroke-linecap="butt" stroke-linejoin="miter"/></g></svg><div class="t" style="left:151.38px;top:304.10px;font-size:5.8px;line-height:5.8px;color:#333;font-family:'Liberation Serif',serif;font-weight:bold;">X</div><div class="ab" style="left:135.75px;top:310.00px;width:35.25px;height:10.40px;background:#fff;"></div><svg class="ab" style="left:135px;top:319px" width="37" height="2"><line x1="0.250" y1="1.500" x2="36.500" y2="1.500" stroke="#6e6e6e" stroke-width="0.75" stroke-dasharray="0.75 0.75"/></svg><div class="ab" style="left:136.25px;top:321.50px;width:16.00px;height:7.50px;background:#fff;"></div><div class="t" style="left:139.95px;top:324.00px;font-size:5.4px;line-height:5.4px;color:#222;font-family:'Liberation Serif',serif;">100</div><div class="ab" style="left:153.75px;top:321.50px;width:16.00px;height:7.50px;background:#dcdcdc;"></div><div class="t" style="left:154.95px;top:323.10px;font-size:5.3px;line-height:5.3px;color:#555;">点动</div><svg class="ab" style="left:135px;top:329px" width="37" height="2"><line x1="0.250" y1="1.500" x2="36.500" y2="1.500" stroke="#6e6e6e" stroke-width="0.75" stroke-dasharray="0.75 0.75"/></svg><svg class="ab" style="left:152px;top:330px" width="2" height="12"><line x1="1.050" y1="0.500" x2="1.050" y2="11.900" stroke="#6e6e6e" stroke-width="0.75" stroke-dasharray="0.75 0.75"/></svg><svg class="ab" style="left:139px;top:331px" width="11" height="11"><g transform="translate(0.250 0.500) scale(1.00000 1.00000) translate(5.0 5.0)"><circle r="5" fill="#1a8ad4"/><path d="M0 2.9V-2.7M-2.2 -0.5L0 -2.7L2.2 -0.5" stroke="#fff" stroke-width="0.9" fill="none" stroke-linecap="butt" stroke-linejoin="miter"/></g></svg><svg class="ab" style="left:157px;top:331px" width="11" height="11"><g transform="translate(0.250 0.500) scale(1.00000 1.00000) translate(5.0 5.0)"><circle r="5" fill="#1a8ad4"/><path d="M0 -2.9V2.7M-2.2 0.5L0 2.7L2.2 0.5" stroke="#fff" stroke-width="0.9" fill="none" stroke-linecap="butt" stroke-linejoin="miter"/></g></svg><div class="ab" style="left:135.75px;top:342.50px;width:35.25px;height:10.40px;background:#fff;"></div><svg class="ab" style="left:135px;top:352px" width="37" height="2"><line x1="0.250" y1="1.000" x2="36.500" y2="1.000" stroke="#6e6e6e" stroke-width="0.75" stroke-dasharray="0.75 0.75"/></svg><div class="ab" style="left:136.25px;top:354.00px;width:16.00px;height:7.50px;background:#fff;"></div><div class="t" style="left:139.95px;top:356.50px;font-size:5.4px;line-height:5.4px;color:#222;font-family:'Liberation Serif',serif;">100</div><div class="ab" style="left:153.75px;top:354.00px;width:16.00px;height:7.50px;background:#dcdcdc;"></div><div class="t" style="left:154.95px;top:355.60px;font-size:5.3px;line-height:5.3px;color:#555;">点动</div><svg class="ab" style="left:135px;top:362px" width="37" height="2"><line x1="0.250" y1="1.000" x2="36.500" y2="1.000" stroke="#6e6e6e" stroke-width="0.75" stroke-dasharray="0.75 0.75"/></svg><svg class="ab" style="left:152px;top:363px" width="2" height="12"><line x1="1.050" y1="0.000" x2="1.050" y2="11.400" stroke="#6e6e6e" stroke-width="0.75" stroke-dasharray="0.75 0.75"/></svg><svg class="ab" style="left:139px;top:364px" width="11" height="10"><g transform="translate(0.250 0.000) scale(1.00000 1.00000) translate(5.0 5.0)"><circle r="5" fill="#1a8ad4"/><path d="M0 2.9V-2.7M-2.2 -0.5L0 -2.7L2.2 -0.5" stroke="#fff" stroke-width="0.9" fill="none" stroke-linecap="butt" stroke-linejoin="miter"/></g></svg><svg class="ab" style="left:157px;top:364px" width="11" height="10"><g transform="translate(0.250 0.000) scale(1.00000 1.00000) translate(5.0 5.0)"><circle r="5" fill="#1a8ad4"/><path d="M0 -2.9V2.7M-2.2 0.5L0 2.7L2.2 0.5" stroke="#fff" stroke-width="0.9" fill="none" stroke-linecap="butt" stroke-linejoin="miter"/></g></svg><div class="t" style="left:187.62px;top:304.10px;font-size:5.8px;line-height:5.8px;color:#333;font-family:'Liberation Serif',serif;font-weight:bold;">Y</div><div class="ab" style="left:172.00px;top:310.00px;width:35.25px;height:10.40px;background:#fff;"></div><div class="t" style="left:179.12px;top:312.00px;font-size:6.4px;line-height:6.4px;color:#e01818;font-family:'Liberation Serif',serif;-webkit-text-stroke:0.3px #e01818">无光纤!</div><svg class="ab" style="left:171px;top:319px" width="37" height="2"><line x1="0.500" y1="1.500" x2="36.750" y2="1.500" stroke="#6e6e6e" stroke-width="0.75" stroke-dasharray="0.75 0.75"/></svg><div class="ab" style="left:172.50px;top:321.50px;width:16.00px;height:7.50px;background:#fff;"></div><div class="t" style="left:176.20px;top:324.00px;font-size:5.4px;line-height:5.4px;color:#222;font-family:'Liberation Serif',serif;">100</div><div class="ab" style="left:190.00px;top:321.50px;width:16.00px;height:7.50px;background:#dcdcdc;"></div><div class="t" style="left:191.20px;top:323.10px;font-size:5.3px;line-height:5.3px;color:#555;">点动</div><svg class="ab" style="left:171px;top:329px" width="37" height="2"><line x1="0.500" y1="1.500" x2="36.750" y2="1.500" stroke="#6e6e6e" stroke-width="0.75" stroke-dasharray="0.75 0.75"/></svg><svg class="ab" style="left:188px;top:330px" width="2" height="12"><line x1="1.300" y1="0.500" x2="1.300" y2="11.900" stroke="#6e6e6e" stroke-width="0.75" stroke-dasharray="0.75 0.75"/></svg><svg class="ab" style="left:175px;top:331px" width="11" height="11"><g transform="translate(0.500 0.500) scale(1.00000 1.00000) translate(5.0 5.0)"><circle r="5" fill="#1a8ad4"/><path d="M0 2.9V-2.7M-2.2 -0.5L0 -2.7L2.2 -0.5" stroke="#fff" stroke-width="0.9" fill="none" stroke-linecap="butt" stroke-linejoin="miter"/></g></svg><svg class="ab" style="left:193px;top:331px" width="11" height="11"><g transform="translate(0.500 0.500) scale(1.00000 1.00000) translate(5.0 5.0)"><circle r="5" fill="#1a8ad4"/><path d="M0 -2.9V2.7M-2.2 0.5L0 2.7L2.2 0.5" stroke="#fff" stroke-width="0.9" fill="none" stroke-linecap="butt" stroke-linejoin="miter"/></g></svg><div class="ab" style="left:172.00px;top:342.50px;width:35.25px;height:10.40px;background:#fff;"></div><div class="t" style="left:179.12px;top:344.50px;font-size:6.4px;line-height:6.4px;color:#e01818;font-family:'Liberation Serif',serif;-webkit-text-stroke:0.3px #e01818">无光纤!</div><svg class="ab" style="left:171px;top:352px" width="37" height="2"><line x1="0.500" y1="1.000" x2="36.750" y2="1.000" stroke="#6e6e6e" stroke-width="0.75" stroke-dasharray="0.75 0.75"/></svg><div class="ab" style="left:172.50px;top:354.00px;width:16.00px;height:7.50px;background:#fff;"></div><div class="t" style="left:176.20px;top:356.50px;font-size:5.4px;line-height:5.4px;color:#222;font-family:'Liberation Serif',serif;">100</div><div class="ab" style="left:190.00px;top:354.00px;width:16.00px;height:7.50px;background:#dcdcdc;"></div><div class="t" style="left:191.20px;top:355.60px;font-size:5.3px;line-height:5.3px;color:#555;">点动</div><svg class="ab" style="left:171px;top:362px" width="37" height="2"><line x1="0.500" y1="1.000" x2="36.750" y2="1.000" stroke="#6e6e6e" stroke-width="0.75" stroke-dasharray="0.75 0.75"/></svg><svg class="ab" style="left:188px;top:363px" width="2" height="12"><line x1="1.300" y1="0.000" x2="1.300" y2="11.400" stroke="#6e6e6e" stroke-width="0.75" stroke-dasharray="0.75 0.75"/></svg><svg class="ab" style="left:175px;top:364px" width="11" height="10"><g transform="translate(0.500 0.000) scale(1.00000 1.00000) translate(5.0 5.0)"><circle r="5" fill="#1a8ad4"/><path d="M0 2.9V-2.7M-2.2 -0.5L0 -2.7L2.2 -0.5" stroke="#fff" stroke-width="0.9" fill="none" stroke-linecap="butt" stroke-linejoin="miter"/></g></svg><svg class="ab" style="left:193px;top:364px" width="11" height="10"><g transform="translate(0.500 0.000) scale(1.00000 1.00000) translate(5.0 5.0)"><circle r="5" fill="#1a8ad4"/><path d="M0 -2.9V2.7M-2.2 0.5L0 2.7L2.2 0.5" stroke="#fff" stroke-width="0.9" fill="none" stroke-linecap="butt" stroke-linejoin="miter"/></g></svg><div class="t" style="left:221.38px;top:304.10px;font-size:5.8px;line-height:5.8px;color:#333;font-family:'Liberation Serif',serif;font-weight:bold;">θ X</div><div class="ab" style="left:208.25px;top:310.00px;width:35.25px;height:10.40px;background:#fff;"></div><svg class="ab" style="left:207px;top:319px" width="37" height="2"><line x1="0.750" y1="1.500" x2="37.000" y2="1.500" stroke="#6e6e6e" stroke-width="0.75" stroke-dasharray="0.75 0.75"/></svg><div class="ab" style="left:208.75px;top:321.50px;width:16.00px;height:7.50px;background:#fff;"></div><div class="t" style="left:212.45px;top:324.00px;font-size:5.4px;line-height:5.4px;color:#222;font-family:'Liberation Serif',serif;">100</div><div class="ab" style="left:226.25px;top:321.50px;width:16.00px;height:7.50px;background:#dcdcdc;"></div><div class="t" style="left:227.45px;top:323.10px;font-size:5.3px;line-height:5.3px;color:#555;">点动</div><svg class="ab" style="left:207px;top:329px" width="37" height="2"><line x1="0.750" y1="1.500" x2="37.000" y2="1.500" stroke="#6e6e6e" stroke-width="0.75" stroke-dasharray="0.75 0.75"/></svg><svg class="ab" style="left:224px;top:330px" width="2" height="12"><line x1="1.550" y1="0.500" x2="1.550" y2="11.900" stroke="#6e6e6e" stroke-width="0.75" stroke-dasharray="0.75 0.75"/></svg><svg class="ab" style="left:211px;top:331px" width="11" height="11"><g transform="translate(0.750 0.500) scale(1.00000 1.00000) translate(5.0 5.0)"><circle r="5" fill="#1a8ad4"/><path d="M0 2.9V-2.7M-2.2 -0.5L0 -2.7L2.2 -0.5" stroke="#fff" stroke-width="0.9" fill="none" stroke-linecap="butt" stroke-linejoin="miter"/></g></svg><svg class="ab" style="left:229px;top:331px" width="11" height="11"><g transform="translate(0.750 0.500) scale(1.00000 1.00000) translate(5.0 5.0)"><circle r="5" fill="#1a8ad4"/><path d="M0 -2.9V2.7M-2.2 0.5L0 2.7L2.2 0.5" stroke="#fff" stroke-width="0.9" fill="none" stroke-linecap="butt" stroke-linejoin="miter"/></g></svg><div class="ab" style="left:208.25px;top:342.50px;width:35.25px;height:10.40px;background:#fff;"></div><svg class="ab" style="left:207px;top:352px" width="37" height="2"><line x1="0.750" y1="1.000" x2="37.000" y2="1.000" stroke="#6e6e6e" stroke-width="0.75" stroke-dasharray="0.75 0.75"/></svg><div class="ab" style="left:208.75px;top:354.00px;width:16.00px;height:7.50px;background:#fff;"></div><div class="t" style="left:212.45px;top:356.50px;font-size:5.4px;line-height:5.4px;color:#222;font-family:'Liberation Serif',serif;">100</div><div class="ab" style="left:226.25px;top:354.00px;width:16.00px;height:7.50px;background:#dcdcdc;"></div><div class="t" style="left:227.45px;top:355.60px;font-size:5.3px;line-height:5.3px;color:#555;">点动</div><svg class="ab" style="left:207px;top:362px" width="37" height="2"><line x1="0.750" y1="1.000" x2="37.000" y2="1.000" stroke="#6e6e6e" stroke-width="0.75" stroke-dasharray="0.75 0.75"/></svg><svg class="ab" style="left:224px;top:363px" width="2" height="12"><line x1="1.550" y1="0.000" x2="1.550" y2="11.400" stroke="#6e6e6e" stroke-width="0.75" stroke-dasharray="0.75 0.75"/></svg><svg class="ab" style="left:211px;top:364px" width="11" height="10"><g transform="translate(0.750 0.000) scale(1.00000 1.00000) translate(5.0 5.0)"><circle r="5" fill="#1a8ad4"/><path d="M0 2.9V-2.7M-2.2 -0.5L0 -2.7L2.2 -0.5" stroke="#fff" stroke-width="0.9" fill="none" stroke-linecap="butt" stroke-linejoin="miter"/></g></svg><svg class="ab" style="left:229px;top:364px" width="11" height="10"><g transform="translate(0.750 0.000) scale(1.00000 1.00000) translate(5.0 5.0)"><circle r="5" fill="#1a8ad4"/><path d="M0 -2.9V2.7M-2.2 0.5L0 2.7L2.2 0.5" stroke="#fff" stroke-width="0.9" fill="none" stroke-linecap="butt" stroke-linejoin="miter"/></g></svg><div class="t" style="left:258.12px;top:304.10px;font-size:5.8px;line-height:5.8px;color:#333;font-family:'Liberation Serif',serif;font-weight:bold;">θ Y</div><div class="ab" style="left:244.50px;top:310.00px;width:35.25px;height:10.40px;background:#fff;"></div><svg class="ab" style="left:244px;top:319px" width="37" height="2"><line x1="0.000" y1="1.500" x2="36.250" y2="1.500" stroke="#6e6e6e" stroke-width="0.75" stroke-dasharray="0.75 0.75"/></svg><div class="ab" style="left:245.00px;top:321.50px;width:16.00px;height:7.50px;background:#fff;"></div><div class="t" style="left:248.70px;top:324.00px;font-size:5.4px;line-height:5.4px;color:#222;font-family:'Liberation Serif',serif;">100</div><div class="ab" style="left:262.50px;top:321.50px;width:16.00px;height:7.50px;background:#dcdcdc;"></div><div class="t" style="left:263.70px;top:323.10px;font-size:5.3px;line-height:5.3px;color:#555;">点动</div><svg class="ab" style="left:244px;top:329px" width="37" height="2"><line x1="0.000" y1="1.500" x2="36.250" y2="1.500" stroke="#6e6e6e" stroke-width="0.75" stroke-dasharray="0.75 0.75"/></svg><svg class="ab" style="left:260px;top:330px" width="2" height="12"><line x1="1.800" y1="0.500" x2="1.800" y2="11.900" stroke="#6e6e6e" stroke-width="0.75" stroke-dasharray="0.75 0.75"/></svg><svg class="ab" style="left:248px;top:331px" width="10" height="11"><g transform="translate(0.000 0.500) scale(1.00000 1.00000) translate(5.0 5.0)"><circle r="5" fill="#1a8ad4"/><path d="M0 2.9V-2.7M-2.2 -0.5L0 -2.7L2.2 -0.5" stroke="#fff" stroke-width="0.9" fill="none" stroke-linecap="butt" stroke-linejoin="miter"/></g></svg><svg class="ab" style="left:266px;top:331px" width="10" height="11"><g transform="translate(0.000 0.500) scale(1.00000 1.00000) translate(5.0 5.0)"><circle r="5" fill="#1a8ad4"/><path d="M0 -2.9V2.7M-2.2 0.5L0 2.7L2.2 0.5" stroke="#fff" stroke-width="0.9" fill="none" stroke-linecap="butt" stroke-linejoin="miter"/></g></svg><div class="ab" style="left:244.50px;top:342.50px;width:35.25px;height:10.40px;background:#fff;"></div><svg class="ab" style="left:244px;top:352px" width="37" height="2"><line x1="0.000" y1="1.000" x2="36.250" y2="1.000" stroke="#6e6e6e" stroke-width="0.75" stroke-dasharray="0.75 0.75"/></svg><div class="ab" style="left:245.00px;top:354.00px;width:16.00px;height:7.50px;background:#fff;"></div><div class="t" style="left:248.70px;top:356.50px;font-size:5.4px;line-height:5.4px;color:#222;font-family:'Liberation Serif',serif;">100</div><div class="ab" style="left:262.50px;top:354.00px;width:16.00px;height:7.50px;background:#dcdcdc;"></div><div class="t" style="left:263.70px;top:355.60px;font-size:5.3px;line-height:5.3px;color:#555;">点动</div><svg class="ab" style="left:244px;top:362px" width="37" height="2"><line x1="0.000" y1="1.000" x2="36.250" y2="1.000" stroke="#6e6e6e" stroke-width="0.75" stroke-dasharray="0.75 0.75"/></svg><svg class="ab" style="left:260px;top:363px" width="2" height="12"><line x1="1.800" y1="0.000" x2="1.800" y2="11.400" stroke="#6e6e6e" stroke-width="0.75" stroke-dasharray="0.75 0.75"/></svg><svg class="ab" style="left:248px;top:364px" width="10" height="10"><g transform="translate(0.000 0.000) scale(1.00000 1.00000) translate(5.0 5.0)"><circle r="5" fill="#1a8ad4"/><path d="M0 2.9V-2.7M-2.2 -0.5L0 -2.7L2.2 -0.5" stroke="#fff" stroke-width="0.9" fill="none" stroke-linecap="butt" stroke-linejoin="miter"/></g></svg><svg class="ab" style="left:266px;top:364px" width="10" height="10"><g transform="translate(0.000 0.000) scale(1.00000 1.00000) translate(5.0 5.0)"><circle r="5" fill="#1a8ad4"/><path d="M0 -2.9V2.7M-2.2 0.5L0 2.7L2.2 0.5" stroke="#fff" stroke-width="0.9" fill="none" stroke-linecap="butt" stroke-linejoin="miter"/></g></svg><div class="t" style="left:294.38px;top:304.10px;font-size:5.8px;line-height:5.8px;color:#333;font-family:'Liberation Serif',serif;font-weight:bold;">θ Z</div><div class="ab" style="left:280.75px;top:310.00px;width:35.25px;height:10.40px;background:#fff;"></div><svg class="ab" style="left:295px;top:314px" width="7" height="1"><rect x="0.175" y="0.400" width="6.400" height="0.600" fill="#e84040"/></svg><svg class="ab" style="left:280px;top:319px" width="37" height="2"><line x1="0.250" y1="1.500" x2="36.500" y2="1.500" stroke="#6e6e6e" stroke-width="0.75" stroke-dasharray="0.75 0.75"/></svg><div class="ab" style="left:281.25px;top:321.50px;width:16.00px;height:7.50px;background:#fff;"></div><div class="t" style="left:287.95px;top:324.00px;font-size:5.4px;line-height:5.4px;color:#222;font-family:'Liberation Serif',serif;">1</div><div class="ab" style="left:298.75px;top:321.50px;width:16.00px;height:7.50px;background:#dcdcdc;"></div><div class="t" style="left:299.95px;top:323.10px;font-size:5.3px;line-height:5.3px;color:#555;">点动</div><svg class="ab" style="left:280px;top:329px" width="37" height="2"><line x1="0.250" y1="1.500" x2="36.500" y2="1.500" stroke="#6e6e6e" stroke-width="0.75" stroke-dasharray="0.75 0.75"/></svg><svg class="ab" style="left:297px;top:330px" width="2" height="12"><line x1="1.050" y1="0.500" x2="1.050" y2="11.900" stroke="#6e6e6e" stroke-width="0.75" stroke-dasharray="0.75 0.75"/></svg><svg class="ab" style="left:284px;top:331px" width="11" height="11"><g transform="translate(0.250 0.500) scale(1.00000 1.00000) translate(5.0 5.0)"><circle r="5" fill="#1a8ad4"/><path d="M0.6 -2.6A2.6 2.6 0 1 1 -2.55 0.4" stroke="#fff" stroke-width="0.9" fill="none" stroke-linecap="butt" stroke-linejoin="miter"/><path d="M-1.4 -2.6L0.8 -3.9V-1.3Z" fill="#fff"/></g></svg><svg class="ab" style="left:302px;top:331px" width="11" height="11"><g transform="translate(0.250 0.500) scale(1.00000 1.00000) translate(5.0 5.0)"><circle r="5" fill="#1a8ad4"/><g transform="scale(-1 1)"><path d="M0.6 -2.6A2.6 2.6 0 1 1 -2.55 0.4" stroke="#fff" stroke-width="0.9" fill="none" stroke-linecap="butt" stroke-linejoin="miter"/><path d="M-1.4 -2.6L0.8 -3.9V-1.3Z" fill="#fff"/></g></g></svg><div class="ab" style="left:280.75px;top:342.50px;width:35.25px;height:10.40px;background:#fff;"></div><svg class="ab" style="left:295px;top:346px" width="7" height="2"><rect x="0.175" y="0.900" width="6.400" height="0.600" fill="#e84040"/></svg><svg class="ab" style="left:280px;top:352px" width="37" height="2"><line x1="0.250" y1="1.000" x2="36.500" y2="1.000" stroke="#6e6e6e" stroke-width="0.75" stroke-dasharray="0.75 0.75"/></svg><div class="ab" style="left:281.25px;top:354.00px;width:16.00px;height:7.50px;background:#fff;"></div><div class="t" style="left:287.95px;top:356.50px;font-size:5.4px;line-height:5.4px;color:#222;font-family:'Liberation Serif',serif;">1</div><div class="ab" style="left:298.75px;top:354.00px;width:16.00px;height:7.50px;background:#dcdcdc;"></div><div class="t" style="left:299.95px;top:355.60px;font-size:5.3px;line-height:5.3px;color:#555;">点动</div><svg class="ab" style="left:280px;top:362px" width="37" height="2"><line x1="0.250" y1="1.000" x2="36.500" y2="1.000" stroke="#6e6e6e" stroke-width="0.75" stroke-dasharray="0.75 0.75"/></svg><svg class="ab" style="left:297px;top:363px" width="2" height="12"><line x1="1.050" y1="0.000" x2="1.050" y2="11.400" stroke="#6e6e6e" stroke-width="0.75" stroke-dasharray="0.75 0.75"/></svg><svg class="ab" style="left:284px;top:364px" width="11" height="10"><g transform="translate(0.250 0.000) scale(1.00000 1.00000) translate(5.0 5.0)"><circle r="5" fill="#1a8ad4"/><path d="M0.6 -2.6A2.6 2.6 0 1 1 -2.55 0.4" stroke="#fff" stroke-width="0.9" fill="none" stroke-linecap="butt" stroke-linejoin="miter"/><path d="M-1.4 -2.6L0.8 -3.9V-1.3Z" fill="#fff"/></g></svg><svg class="ab" style="left:302px;top:364px" width="11" height="10"><g transform="translate(0.250 0.000) scale(1.00000 1.00000) translate(5.0 5.0)"><circle r="5" fill="#1a8ad4"/><g transform="scale(-1 1)"><path d="M0.6 -2.6A2.6 2.6 0 1 1 -2.55 0.4" stroke="#fff" stroke-width="0.9" fill="none" stroke-linecap="butt" stroke-linejoin="miter"/><path d="M-1.4 -2.6L0.8 -3.9V-1.3Z" fill="#fff"/></g></g></svg><svg class="ab" style="left:82px;top:299px" width="263" height="2"><line x1="0.600" y1="1.000" x2="262.600" y2="1.000" stroke="#6e6e6e" stroke-width="0.75" stroke-dasharray="0.75 0.75"/></svg><svg class="ab" style="left:82px;top:373px" width="263" height="2"><line x1="0.600" y1="1.500" x2="262.600" y2="1.500" stroke="#6e6e6e" stroke-width="0.75" stroke-dasharray="0.75 0.75"/></svg><svg class="ab" style="left:81px;top:300px" width="2" height="75"><line x1="1.600" y1="0.000" x2="1.600" y2="74.500" stroke="#6e6e6e" stroke-width="0.75" stroke-dasharray="0.75 0.75"/></svg><svg class="ab" style="left:343px;top:300px" width="2" height="75"><line x1="1.600" y1="0.000" x2="1.600" y2="74.500" stroke="#6e6e6e" stroke-width="0.75" stroke-dasharray="0.75 0.75"/></svg><svg class="ab" style="left:82px;top:308px" width="263" height="2"><line x1="0.600" y1="1.400" x2="262.600" y2="1.400" stroke="#6e6e6e" stroke-width="0.75" stroke-dasharray="0.75 0.75"/></svg><svg class="ab" style="left:82px;top:340px" width="263" height="2"><line x1="0.600" y1="1.900" x2="262.600" y2="1.900" stroke="#6e6e6e" stroke-width="0.75" stroke-dasharray="0.75 0.75"/></svg><svg class="ab" style="left:98px;top:300px" width="2" height="75"><line x1="1.000" y1="0.000" x2="1.000" y2="74.500" stroke="#6e6e6e" stroke-width="0.75" stroke-dasharray="0.75 0.75"/></svg><svg class="ab" style="left:134px;top:300px" width="2" height="75"><line x1="1.250" y1="0.000" x2="1.250" y2="74.500" stroke="#6e6e6e" stroke-width="0.75" stroke-dasharray="0.75 0.75"/></svg><svg class="ab" style="left:170px;top:300px" width="2" height="75"><line x1="1.500" y1="0.000" x2="1.500" y2="74.500" stroke="#6e6e6e" stroke-width="0.75" stroke-dasharray="0.75 0.75"/></svg><svg class="ab" style="left:206px;top:300px" width="2" height="75"><line x1="1.750" y1="0.000" x2="1.750" y2="74.500" stroke="#6e6e6e" stroke-width="0.75" stroke-dasharray="0.75 0.75"/></svg><svg class="ab" style="left:243px;top:300px" width="2" height="75"><line x1="1.000" y1="0.000" x2="1.000" y2="74.500" stroke="#6e6e6e" stroke-width="0.75" stroke-dasharray="0.75 0.75"/></svg><svg class="ab" style="left:279px;top:300px" width="2" height="75"><line x1="1.250" y1="0.000" x2="1.250" y2="74.500" stroke="#6e6e6e" stroke-width="0.75" stroke-dasharray="0.75 0.75"/></svg><svg class="ab" style="left:315px;top:300px" width="2" height="75"><line x1="1.500" y1="0.000" x2="1.500" y2="74.500" stroke="#6e6e6e" stroke-width="0.75" stroke-dasharray="0.75 0.75"/></svg><div class="t" style="left:326.50px;top:304.10px;font-size:5.8px;line-height:5.8px;color:#333;font-family:'Liberation Serif',serif;font-weight:bold;">CA</div><div class="t" style="left:84.50px;top:323.50px;font-size:6.8px;line-height:6.8px;color:#333;font-family:'Liberation Serif',serif;">左：</div><div class="t" style="left:84.50px;top:356.00px;font-size:6.8px;line-height:6.8px;color:#333;font-family:'Liberation Serif',serif;">右：</div><div class="ab" style="left:347.30px;top:299.50px;width:171.10px;height:74.50px;background:#f0f0f0;border:0.7px solid #d4d4d4;"></div><svg class="ab" style="left:347px;top:309px" width="172" height="1"><rect x="0.300" y="0.000" width="171.100" height="0.700" fill="#d0d0d0"/></svg><svg class="ab" style="left:381px;top:299px" width="2" height="75"><rect x="0.300" y="0.500" width="0.800" height="74.500" fill="#d6d6d6"/></svg><svg class="ab" style="left:415px;top:299px" width="1" height="75"><rect x="0.000" y="0.500" width="0.800" height="74.500" fill="#d6d6d6"/></svg><svg class="ab" style="left:483px;top:299px" width="2" height="75"><rect x="0.600" y="0.500" width="0.800" height="74.500" fill="#d6d6d6"/></svg><div class="t" style="left:357.80px;top:302.50px;font-size:6.3px;line-height:6.3px;color:#333;font-family:'Liberation Serif',serif;">到位</div><div class="t" style="left:391.70px;top:302.50px;font-size:6.3px;line-height:6.3px;color:#333;font-family:'Liberation Serif',serif;">间距</div><div class="t" style="left:436.80px;top:302.50px;font-size:6.3px;line-height:6.3px;color:#333;font-family:'Liberation Serif',serif;">双边操作</div><div class="t" style="left:495.00px;top:302.50px;font-size:6.3px;line-height:6.3px;color:#333;font-family:'Liberation Serif',serif;">火头</div><div class="ab" style="left:347.80px;top:312.00px;width:32.50px;height:11.30px;background:#fff;border:0.6px solid #cdcdcd;"></div><div class="t" style="left:357.55px;top:316.20px;font-size:6.5px;line-height:6.5px;color:#222;">-100</div><div class="ab" style="left:348.00px;top:326.00px;width:32.60px;height:14.80px;background:#e0e0e0;"></div><div class="ab" style="left:347.80px;top:344.00px;width:32.50px;height:11.20px;background:#fff;border:0.6px solid #cdcdcd;"></div><div class="t" style="left:358.05px;top:348.10px;font-size:6.5px;line-height:6.5px;color:#222;">100</div><div class="ab" style="left:348.00px;top:358.40px;width:32.60px;height:15.00px;background:#e0e0e0;"></div><svg class="ab" style="left:354px;top:328px" width="20" height="11"><g transform="translate(0.500 0.800)"><path d="M0.6 4.6H7" stroke="#1d93e0" stroke-width="1.9"/><path d="M6 1.2L10.6 4.6L6 8Z" fill="#1d93e0"/><rect x="12.8" y="0.6" width="4.4" height="8.2" rx="0.5" fill="#1d93e0"/></g></svg><svg class="ab" style="left:354px;top:361px" width="20" height="11"><g transform="translate(0.500 0.300)"><rect x="0.6" y="0.6" width="4.4" height="8.2" rx="0.5" fill="#1d93e0"/><path d="M10.6 4.6H17.2" stroke="#1d93e0" stroke-width="1.9"/><path d="M11.6 1.2L7 4.6L11.6 8Z" fill="#1d93e0"/></g></svg><svg class="ab" style="left:348px;top:341px" width="33" height="1"><rect x="0.000" y="0.200" width="33.000" height="0.700" fill="#dedede"/></svg><div class="ab" style="left:384.40px;top:319.50px;width:26.20px;height:12.10px;background:#fff;border:0.6px solid #cdcdcd;"></div><div class="t" style="left:394.00px;top:324.10px;font-size:6.5px;line-height:6.5px;color:#222;">30</div><svg class="ab" style="left:382px;top:341px" width="33" height="1"><rect x="0.000" y="0.000" width="32.600" height="0.700" fill="#d8d8d8"/></svg><div class="ab" style="left:382.00px;top:351.80px;width:32.60px;height:12.40px;background:#e0e0e0;"></div><svg class="ab" style="left:382px;top:364px" width="33" height="1"><rect x="0.000" y="0.200" width="32.600" height="0.700" fill="#d8d8d8"/></svg><svg class="ab" style="left:392px;top:352px" width="13" height="12"><g transform="translate(0.000 0.800)"><rect x="0" y="0" width="2.3" height="10.2" fill="#1d93e0"/><rect x="10.2" y="0" width="2.3" height="10.2" fill="#1d93e0"/><path d="M3.5 5.1H9" stroke="#1d93e0" stroke-width="1.2"/><path d="M2.4 5.1L5 2.9V7.3Z M10.1 5.1L7.5 2.9V7.3Z" fill="#1d93e0"/></g></svg><div class="ab" style="left:424.20px;top:314.20px;width:32.70px;height:12.00px;background:#fff;border:0.6px solid #cdcdcd;"></div><div class="t" style="left:434.55px;top:318.65px;font-size:6.5px;line-height:6.5px;color:#222;">100</div><div class="t" style="left:461.40px;top:319.00px;font-size:6.8px;line-height:6.8px;color:#555;">um</div><div class="ab" style="left:416.30px;top:331.60px;width:32.10px;height:19.20px;background:#dedede;"></div><svg class="ab" style="left:421px;top:335px" width="22" height="12"><g transform="translate(0.850 0.700)"><rect x="9.3" y="0.5" width="2.4" height="10" fill="#1d93e0"/><path d="M0.5 5.5H5" stroke="#1d93e0" stroke-width="1.5"/><path d="M4.2 2.2L8 5.5L4.2 8.8Z" fill="#1d93e0"/><path d="M16 5.5H20.5" stroke="#1d93e0" stroke-width="1.5"/><path d="M16.8 2.2L13 5.5L16.8 8.8Z" fill="#1d93e0"/></g></svg><div class="ab" style="left:449.60px;top:331.60px;width:32.20px;height:19.20px;background:#dedede;"></div><svg class="ab" style="left:455px;top:335px" width="22" height="12"><g transform="translate(0.200 0.700)"><rect x="9.3" y="0.5" width="2.4" height="10" fill="#1d93e0"/><path d="M3.5 5.5H8" stroke="#1d93e0" stroke-width="1.5"/><path d="M4.3 2.2L0.5 5.5L4.3 8.8Z" fill="#1d93e0"/><path d="M13 5.5H17.5" stroke="#1d93e0" stroke-width="1.5"/><path d="M16.7 2.2L20.5 5.5L16.7 8.8Z" fill="#1d93e0"/></g></svg><div class="ab" style="left:416.30px;top:352.90px;width:32.10px;height:20.30px;background:#dedede;"></div><svg class="ab" style="left:421px;top:357px" width="22" height="12"><g transform="translate(0.850 0.550)"><rect x="9.3" y="0.5" width="2.4" height="10" fill="#1d93e0"/><path d="M3.5 5.5H8" stroke="#1d93e0" stroke-width="1.5"/><path d="M4.3 2.2L0.5 5.5L4.3 8.8Z" fill="#1d93e0"/><path d="M16 5.5H20.5" stroke="#1d93e0" stroke-width="1.5"/><path d="M16.8 2.2L13 5.5L16.8 8.8Z" fill="#1d93e0"/></g></svg><div class="ab" style="left:449.60px;top:352.90px;width:32.20px;height:20.30px;background:#dedede;"></div><svg class="ab" style="left:455px;top:357px" width="22" height="12"><g transform="translate(0.200 0.550)"><rect x="9.3" y="0.5" width="2.4" height="10" fill="#1d93e0"/><path d="M0.5 5.5H5" stroke="#1d93e0" stroke-width="1.5"/><path d="M4.2 2.2L8 5.5L4.2 8.8Z" fill="#1d93e0"/><path d="M13 5.5H17.5" stroke="#1d93e0" stroke-width="1.5"/><path d="M16.7 2.2L20.5 5.5L16.7 8.8Z" fill="#1d93e0"/></g></svg><div class="ab" style="left:485.80px;top:311.40px;width:30.50px;height:12.30px;background:#dcdcdc;border:0.6px solid #cacaca;"></div><div class="t" style="left:494.40px;top:316.00px;font-size:5.9px;line-height:5.9px;color:#888;">点动</div><svg class="ab" style="left:484px;top:325px" width="34" height="1"><rect x="0.000" y="0.000" width="34.000" height="0.700" fill="#d8d8d8"/></svg><div class="ab" style="left:489.00px;top:327.60px;width:23.70px;height:11.50px;background:#fff;border:0.6px solid #cdcdcd;"></div><div class="t" style="left:494.85px;top:332.00px;font-size:6.5px;line-height:6.5px;color:#222;">100</div><svg class="ab" style="left:484px;top:341px" width="34" height="1"><rect x="0.000" y="0.300" width="34.000" height="0.700" fill="#d0d0d0"/></svg><svg class="ab" style="left:500px;top:342px" width="2" height="32"><rect x="0.800" y="0.000" width="0.700" height="31.500" fill="#dcdcdc"/></svg><div class="ab" style="left:486.00px;top:349.70px;width:13.50px;height:15.60px;background:#e2e2e2;"></div><div class="ab" style="left:502.50px;top:349.70px;width:14.00px;height:15.60px;background:#e2e2e2;"></div><svg class="ab" style="left:486px;top:351px" width="12" height="13"><g transform="translate(0.400 0.900) scale(1.12000 1.12000) translate(5.0 5.0)"><circle r="5" fill="#1a8ad4"/><path d="M2.9 0H-2.7M-0.5 -2.2L-2.7 0L-0.5 2.2" stroke="#fff" stroke-width="0.9" fill="none" stroke-linecap="butt" stroke-linejoin="miter"/></g></svg><svg class="ab" style="left:504px;top:351px" width="12" height="13"><g transform="translate(0.200 0.900) scale(1.12000 1.12000) translate(5.0 5.0)"><circle r="5" fill="#1a8ad4"/><path d="M-2.9 0H2.7M0.5 -2.2L2.7 0L0.5 2.2" stroke="#fff" stroke-width="0.9" fill="none" stroke-linecap="butt" stroke-linejoin="miter"/></g></svg><div class="ab" style="left:521.20px;top:299.70px;width:187.20px;height:74.60px;background:#f0f0f0;border:0.7px solid #d4d4d4;"></div><div class="ab" style="left:522.20px;top:300.40px;width:16.80px;height:74.00px;background:#dcdcdc;"></div><div class="t" style="left:523.40px;top:306.50px;font-size:12.0px;line-height:12.0px;color:#707070;font-family:'Liberation Serif',serif;">流</div><div class="t" style="left:523.40px;top:324.00px;font-size:12.0px;line-height:12.0px;color:#707070;font-family:'Liberation Serif',serif;">程</div><div class="t" style="left:523.90px;top:340.10px;font-size:12.0px;line-height:12.0px;color:#707070;font-family:'Liberation Serif',serif;">设</div><div class="t" style="left:523.40px;top:355.70px;font-size:12.0px;line-height:12.0px;color:#707070;font-family:'Liberation Serif',serif;">置</div><svg class="ab" style="left:539px;top:318px" width="113" height="1"><rect x="0.400" y="0.000" width="112.000" height="0.700" fill="#d8d8d8"/></svg><svg class="ab" style="left:539px;top:336px" width="113" height="2"><rect x="0.400" y="0.500" width="112.000" height="0.700" fill="#d8d8d8"/></svg><svg class="ab" style="left:539px;top:355px" width="113" height="1"><rect x="0.400" y="0.200" width="112.000" height="0.700" fill="#d8d8d8"/></svg><svg class="ab" style="left:651px;top:300px" width="2" height="74"><rect x="0.400" y="0.000" width="0.700" height="74.000" fill="#d4d4d4"/></svg><div class="ab" style="left:547.30px;top:303.00px;width:67.30px;height:11.20px;background:#fff;border:0.6px solid #b9b9b9;"></div><div class="t" style="left:548.60px;top:304.60px;font-size:7.2px;line-height:7.2px;color:#111;">150-刚开始</div><svg class="ab" style="left:609px;top:307px" width="5" height="4"><g transform="translate(0.500 0.100)"><path d="M0.6 0.9L2 2.2L3.4 0.9" stroke="#777" stroke-width="0.5" fill="none"/></g></svg><div class="ab" style="left:617.00px;top:303.20px;width:27.00px;height:11.00px;background:#e3e3e3;border:0.7px solid #4a9ee0;"></div><div class="t" style="left:621.90px;top:306.20px;font-size:6.8px;line-height:6.8px;color:#888;">熔接1</div><div class="ab" style="left:547.30px;top:321.70px;width:67.30px;height:11.30px;background:#fff;border:0.6px solid #b9b9b9;"></div><div class="t" style="left:548.60px;top:323.85px;font-size:7.2px;line-height:7.2px;color:#111;">125</div><svg class="ab" style="left:609px;top:325px" width="5" height="4"><g transform="translate(0.500 0.850)"><path d="M0.6 0.9L2 2.2L3.4 0.9" stroke="#777" stroke-width="0.5" fill="none"/></g></svg><div class="ab" style="left:617.00px;top:322.30px;width:27.00px;height:10.00px;background:#e3e3e3;border:0.7px solid #d2d2d2;"></div><div class="t" style="left:621.90px;top:324.80px;font-size:6.8px;line-height:6.8px;color:#888;">熔接2</div><div class="ab" style="left:547.30px;top:340.00px;width:67.30px;height:11.40px;background:#fff;border:0.6px solid #b9b9b9;"></div><div class="t" style="left:548.60px;top:342.20px;font-size:7.2px;line-height:7.2px;color:#111;">125</div><svg class="ab" style="left:609px;top:344px" width="5" height="4"><g transform="translate(0.500 0.200)"><path d="M0.6 0.9L2 2.2L3.4 0.9" stroke="#777" stroke-width="0.5" fill="none"/></g></svg><div class="ab" style="left:617.00px;top:340.50px;width:27.00px;height:10.50px;background:#e3e3e3;border:0.7px solid #d2d2d2;"></div><div class="t" style="left:621.90px;top:343.25px;font-size:6.8px;line-height:6.8px;color:#888;">熔接3</div><div class="ab" style="left:547.30px;top:358.80px;width:67.30px;height:11.20px;background:#fff;border:0.6px solid #b9b9b9;"></div><div class="t" style="left:548.60px;top:360.90px;font-size:7.2px;line-height:7.2px;color:#111;">125</div><svg class="ab" style="left:609px;top:362px" width="5" height="4"><g transform="translate(0.500 0.900)"><path d="M0.6 0.9L2 2.2L3.4 0.9" stroke="#777" stroke-width="0.5" fill="none"/></g></svg><div class="ab" style="left:617.00px;top:359.00px;width:27.00px;height:11.00px;background:#e3e3e3;border:0.7px solid #d2d2d2;"></div><div class="t" style="left:621.90px;top:362.00px;font-size:6.8px;line-height:6.8px;color:#888;">熔接4</div><svg class="ab" style="left:652px;top:336px" width="56" height="2"><rect x="0.000" y="0.500" width="56.000" height="0.700" fill="#d8d8d8"/></svg><div class="ab" style="left:653.00px;top:305.30px;width:52.80px;height:25.50px;background:#d2d2d2;border:0.6px solid #c8c8c8;"></div><div class="t" style="left:663.40px;top:314.00px;font-size:7.6px;line-height:7.6px;color:#555;font-family:'Liberation Serif',serif;letter-spacing:0.4px;">继续流程</div><div class="ab" style="left:653.00px;top:343.00px;width:52.80px;height:24.30px;background:#e6e6e6;border:0.6px solid #cfcfcf;"></div><div class="t" style="left:657.90px;top:352.20px;font-size:7.0px;line-height:7.0px;color:#444;font-family:'Liberation Serif',serif;letter-spacing:0.2px;">旋转电机复位</div><div class="ab" style="left:0.00px;top:376.20px;width:710.00px;height:8.80px;background:#f0f0f0;border-top:0.6px solid #dcdcdc"></div><div class="t" style="left:1.00px;top:379.90px;font-size:4.54px;line-height:4.54px;color:#e03030;">系统剩余试用时间： 22天</div><div class="t" style="left:56.00px;top:379.90px;font-size:4.54px;line-height:4.54px;color:#444;">火头功率： --</div><div class="t" style="left:86.00px;top:379.90px;font-size:4.54px;line-height:4.54px;color:#444;">氩气流量： 381.2ml/min</div><div class="t" style="left:137.00px;top:379.90px;font-size:4.54px;line-height:4.54px;color:#444;">加热时间： 5.15</div><div class="t" style="left:173.00px;top:379.90px;font-size:4.54px;line-height:4.54px;color:#444;">功耗： --</div><svg class="ab" style="left:650px;top:377px" width="7" height="7"><g transform="translate(0.500 0.800)"><path d="M3 0.5L5.6 5.3H0.4Z" fill="none" stroke="#e08a40" stroke-width="0.9"/><circle cx="3" cy="3.6" r="1" fill="#888"/></g></svg><div class="t" style="left:658.00px;top:379.30px;font-size:4.5px;line-height:4.5px;color:#555;">深圳市讯聚科技有限公司</div><div class="ab" style="left:0.00px;top:385.00px;width:710.00px;height:15.00px;background:#0a0e17;"></div><svg class="ab" style="left:5px;top:389px" width="8" height="7"><g transform="translate(0.900 0.600)"><g fill="#fff"><rect x="0" y="0.4" width="2.9" height="2.6"/><rect x="3.3" y="0" width="3" height="3"/><rect x="0" y="3.4" width="2.9" height="2.6"/><rect x="3.3" y="3.4" width="3" height="2.9"/></g></g></svg><svg class="ab" style="left:23px;top:389px" width="8" height="8"><g transform="translate(0.000 0.000)"><circle cx="4.8" cy="3.2" r="2.3" fill="none" stroke="#ddd" stroke-width="0.7"/><path d="M3.2 4.8L0.8 7.2" stroke="#ddd" stroke-width="0.8"/></g></svg><svg class="ab" style="left:40px;top:389px" width="9" height="8"><g transform="translate(0.800 0.800)"><rect x="0.4" y="1.5" width="5" height="4.4" fill="none" stroke="#ddd" stroke-width="0.7"/><path d="M2 0.5H7V4.5" fill="none" stroke="#ddd" stroke-width="0.6"/></g></svg><div class="ab" style="left:60.00px;top:388.60px;width:6.20px;height:8.80px;background:linear-gradient(#cfe6f7,#7fb6e0);"></div><div class="ab" style="left:72.50px;top:385.00px;width:17.60px;height:15.00px;background:#33363b;"></div><svg class="ab" style="left:73px;top:399px" width="17" height="1"><rect x="0.500" y="0.200" width="15.600" height="0.800" fill="#8fc3ee"/></svg><svg class="ab" style="left:76px;top:388px" width="11" height="10"><g transform="translate(0.600 0.000) scale(0.50000 0.50000) translate(-0.0 -0.0)"><circle cx="9.5" cy="9.5" r="8.4" fill="#cdd6e2"/>
<g transform="translate(9.5 9.5)">
<path d="M-1.6 -5.0 A5.2 5.2 0 0 1 5.1 1.0 Q3.6 -1.4 -0.6 -3.2 Z" fill="#2a3563"/>
<path d="M-1.6 -5.0 A5.2 5.2 0 0 1 5.1 1.0 Q3.6 -1.4 -0.6 -3.2 Z" fill="#eaa766" transform="rotate(90)"/>
<path d="M-1.6 -5.0 A5.2 5.2 0 0 1 5.1 1.0 Q3.6 -1.4 -0.6 -3.2 Z" fill="#2a3563" transform="rotate(180)"/>
<path d="M-1.6 -5.0 A5.2 5.2 0 0 1 5.1 1.0 Q3.6 -1.4 -0.6 -3.2 Z" fill="#eaa766" transform="rotate(270)"/>
</g></g></svg><svg class="ab" style="left:595px;top:388px" width="8" height="9"><g transform="translate(0.500 0.500)"><circle cx="4.5" cy="2" r="1.3" fill="none" stroke="#ccc" stroke-width="0.6"/><path d="M1 7.5L3 4L4.5 5L6 3.5M3 4L2.5 6" stroke="#ccc" stroke-width="0.6" fill="none"/></g></svg><svg class="ab" style="left:608px;top:390px" width="6" height="4"><g transform="translate(0.500 0.500)"><path d="M0.5 2.6L2.5 0.6L4.5 2.6" stroke="#ddd" stroke-width="0.6" fill="none"/></g></svg><svg class="ab" style="left:616px;top:389px" width="8" height="8"><g transform="translate(0.800 0.300)"><path d="M0.6 1.2Q3 -0.2 5.4 1.2V3.6Q5 5.6 3 6.4Q1 5.6 0.6 3.6Z" fill="#e8e8e8"/><circle cx="4.4" cy="4.9" r="1.6" fill="#e84848"/></g></svg><svg class="ab" style="left:625px;top:389px" width="8" height="8"><g transform="translate(0.300 0.400)"><rect x="0.5" y="0.6" width="5.6" height="4.4" fill="none" stroke="#dadada" stroke-width="0.7"/><path d="M2 5.6h2.5" stroke="#dadada" stroke-width="0.6"/><circle cx="4.7" cy="4.8" r="1.6" fill="#e84848"/></g></svg><svg class="ab" style="left:634px;top:389px" width="8" height="8"><g transform="translate(0.200 0.400)"><path d="M0.6 2.2H1.8L3.4 0.8V5.6L1.8 4.2H0.6Z" fill="none" stroke="#dadada" stroke-width="0.6"/><circle cx="4.8" cy="4.9" r="1.6" fill="#e84848"/></g></svg><div class="t" style="left:644.00px;top:390.60px;font-size:5.0px;line-height:5.0px;color:#e0e0e0;">英</div><svg class="ab" style="left:653px;top:389px" width="8" height="7"><g transform="translate(0.800 0.800)"><rect x="0" y="0" width="6.6" height="5.6" fill="#e6e6e6"/><path d="M1 1.4h4.6M1 2.8h4.6M1.6 4.2h3.4" stroke="#777" stroke-width="0.5"/></g></svg><div class="t" style="left:670.60px;top:388.10px;font-size:5.3px;line-height:5.3px;color:#e6e6e6;">18:19</div><div class="t" style="left:665.40px;top:394.80px;font-size:5.1px;line-height:5.1px;color:#e6e6e6;">2024/6/25</div><svg class="ab" style="left:694px;top:389px" width="11" height="10"><g transform="translate(0.800 0.400)"><path d="M0.4 0.4H6.8V5.6H3.2L1.6 7.2V5.6H0.4Z" fill="#dcdcdc"/><path d="M1.4 1.8H5.6M1.4 3.0H5.6M1.4 4.2H4" stroke="#9a9a9a" stroke-width="0.45"/><circle cx="6.6" cy="6.6" r="2.3" fill="#0a0e17" stroke="#cfcfcf" stroke-width="0.55"/><circle cx="6.6" cy="6.6" r="0.9" fill="none" stroke="#bbb" stroke-width="0.4"/></g></svg></body></html>
